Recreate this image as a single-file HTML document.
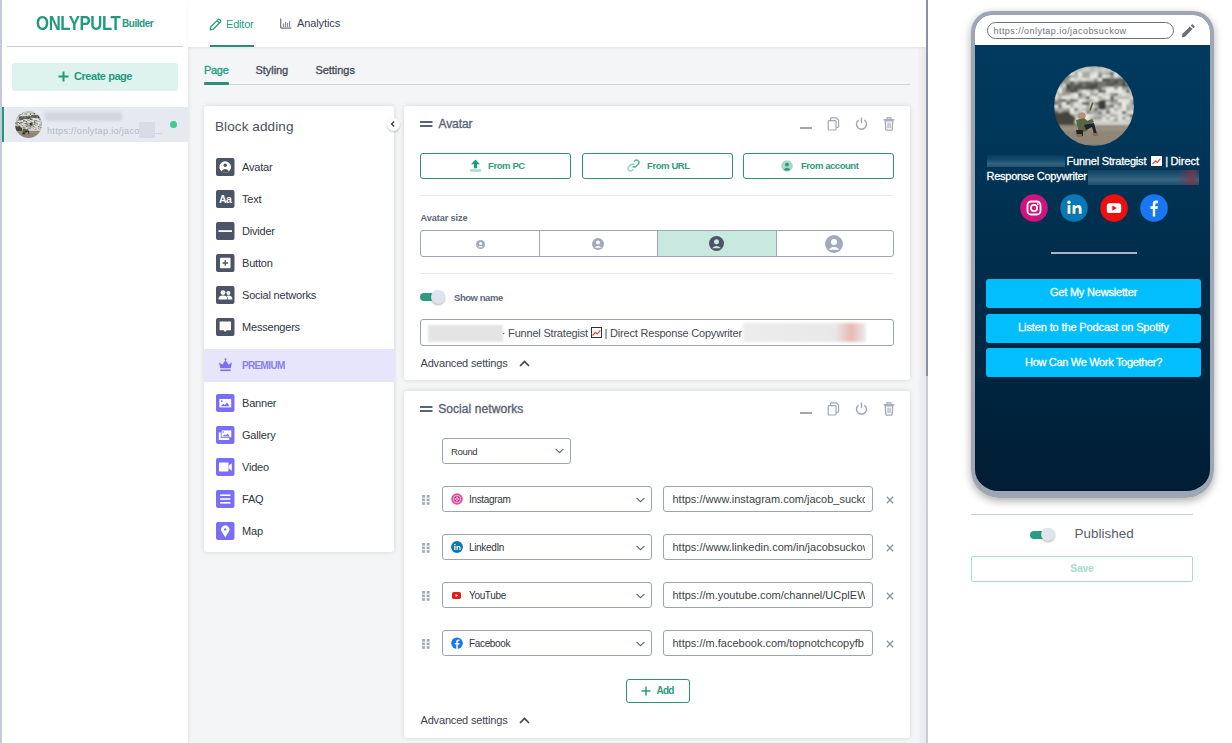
<!DOCTYPE html>
<html><head><meta charset="utf-8">
<style>
*{box-sizing:border-box;margin:0;padding:0}
html,body{width:1232px;height:743px;overflow:hidden;background:#f3f5f7;font-family:"Liberation Sans",sans-serif;color:#3b4150}
.a{position:absolute}
.t{position:absolute;white-space:nowrap;line-height:1}
svg{display:block}
</style></head><body>

<!-- left strip -->
<div class="a" style="left:0;top:0;width:2px;height:743px;background:#c5cbd9"></div>

<!-- sidebar -->
<div class="a" style="left:2px;top:0;width:186px;height:743px;background:#fff;box-shadow:1px 0 3px rgba(0,0,0,.08)">
</div>
<div class="t" style="left:36.3px;top:14.4px;font-size:19.5px;font-weight:700;letter-spacing:-0.4px;color:#1f9a7d;transform:scaleX(.855);transform-origin:0 0">ONLYPULT</div>
<div class="t" style="left:122px;top:19px;font-size:10px;font-weight:700;letter-spacing:-0.45px;color:#1f9a7d">Builder</div>
<div class="a" style="left:7px;top:46px;width:176px;height:1px;background:#c9ced8"></div>
<div class="a" style="left:12px;top:63px;width:166px;height:28px;background:#dff3ee;border-radius:3px"></div>
<svg class="a" style="left:58px;top:71px" width="11" height="11" viewBox="0 0 11 11"><path d="M5.5 0.5v10M0.5 5.5h10" stroke="#1f9a7d" stroke-width="2"/></svg>
<div class="t" style="left:74px;top:71px;font-size:11px;font-weight:700;letter-spacing:-0.45px;color:#1f9a7d">Create page</div>
<!-- page row -->
<div class="a" style="left:2px;top:107px;width:186px;height:35px;background:#e6e9f0"></div>
<div class="a" style="left:2px;top:107px;width:2px;height:35px;background:#1f9a7d"></div>
<svg class="a" style="left:15px;top:111px" width="27" height="27" viewBox="0 0 80 80"><defs><clipPath id="cp2"><circle cx="40" cy="40" r="40"/></clipPath><filter id="bl2" x="-5%" y="-5%" width="110%" height="110%"><feGaussianBlur stdDeviation="1.5"/></filter></defs><g clip-path="url(#cp2)">
<g filter="url(#bl2)"><rect width="80" height="80" fill="#b0b0aa"/><rect x="0" y="0" width="5" height="4" fill="#b8b8b2"/><rect x="4" y="0" width="4" height="3" fill="#b8b8b2"/><rect x="8" y="0" width="6" height="3" fill="#d0d0ca"/><rect x="12" y="0" width="4" height="3" fill="#d0d0ca"/><rect x="16" y="0" width="6" height="3" fill="#b8b8b2"/><rect x="20" y="0" width="5" height="3" fill="#d0d0ca"/><rect x="24" y="0" width="4" height="3" fill="#b8b8b2"/><rect x="28" y="0" width="6" height="3" fill="#c8c8c2"/><rect x="32" y="0" width="5" height="3" fill="#d0d0ca"/><rect x="36" y="0" width="5" height="4" fill="#b8b8b2"/><rect x="40" y="0" width="5" height="4" fill="#c8c8c2"/><rect x="44" y="0" width="4" height="4" fill="#b8b8b2"/><rect x="48" y="0" width="6" height="4" fill="#c8c8c2"/><rect x="52" y="0" width="4" height="4" fill="#b8b8b2"/><rect x="56" y="0" width="5" height="3" fill="#d0d0ca"/><rect x="60" y="0" width="4" height="3" fill="#b8b8b2"/><rect x="64" y="0" width="5" height="4" fill="#c8c8c2"/><rect x="68" y="0" width="5" height="3" fill="#d0d0ca"/><rect x="72" y="0" width="6" height="4" fill="#c8c8c2"/><rect x="76" y="0" width="5" height="3" fill="#d0d0ca"/><rect x="0" y="3" width="4" height="3" fill="#c8c8c2"/><rect x="4" y="3" width="4" height="4" fill="#c8c8c2"/><rect x="8" y="3" width="6" height="3" fill="#c8c8c2"/><rect x="12" y="3" width="6" height="3" fill="#c8c8c2"/><rect x="16" y="3" width="4" height="4" fill="#d0d0ca"/><rect x="20" y="3" width="4" height="4" fill="#c8c8c2"/><rect x="24" y="3" width="5" height="3" fill="#b8b8b2"/><rect x="28" y="3" width="6" height="3" fill="#d0d0ca"/><rect x="32" y="3" width="4" height="4" fill="#c8c8c2"/><rect x="36" y="3" width="5" height="4" fill="#b8b8b2"/><rect x="40" y="3" width="4" height="3" fill="#c8c8c2"/><rect x="44" y="3" width="4" height="4" fill="#c8c8c2"/><rect x="48" y="3" width="4" height="4" fill="#d0d0ca"/><rect x="52" y="3" width="5" height="3" fill="#c8c8c2"/><rect x="56" y="3" width="4" height="3" fill="#d0d0ca"/><rect x="60" y="3" width="6" height="3" fill="#c8c8c2"/><rect x="64" y="3" width="5" height="3" fill="#d0d0ca"/><rect x="68" y="3" width="4" height="3" fill="#c8c8c2"/><rect x="72" y="3" width="4" height="4" fill="#d0d0ca"/><rect x="76" y="3" width="5" height="4" fill="#b8b8b2"/><rect x="0" y="6" width="4" height="3" fill="#9c9c96"/><rect x="4" y="6" width="6" height="3" fill="#d6d6d0"/><rect x="8" y="6" width="6" height="3" fill="#e2e2dc"/><rect x="12" y="6" width="5" height="3" fill="#ececE6"/><rect x="16" y="6" width="5" height="4" fill="#e2e2dc"/><rect x="20" y="6" width="4" height="4" fill="#aaaaa4"/><rect x="24" y="6" width="5" height="3" fill="#ececE6"/><rect x="28" y="6" width="5" height="4" fill="#aaaaa4"/><rect x="32" y="6" width="4" height="3" fill="#aaaaa4"/><rect x="36" y="6" width="5" height="4" fill="#d6d6d0"/><rect x="40" y="6" width="4" height="4" fill="#e2e2dc"/><rect x="44" y="6" width="4" height="3" fill="#9c9c96"/><rect x="48" y="6" width="5" height="3" fill="#b8b8b2"/><rect x="52" y="6" width="5" height="3" fill="#aaaaa4"/><rect x="56" y="6" width="4" height="4" fill="#5c5c56"/><rect x="60" y="6" width="6" height="3" fill="#e2e2dc"/><rect x="64" y="6" width="4" height="4" fill="#d6d6d0"/><rect x="68" y="6" width="5" height="4" fill="#5c5c56"/><rect x="72" y="6" width="6" height="4" fill="#5c5c56"/><rect x="76" y="6" width="4" height="3" fill="#d6d6d0"/><rect x="0" y="9" width="5" height="3" fill="#e2e2dc"/><rect x="4" y="9" width="4" height="4" fill="#d6d6d0"/><rect x="8" y="9" width="5" height="4" fill="#9c9c96"/><rect x="12" y="9" width="5" height="3" fill="#767670"/><rect x="16" y="9" width="6" height="3" fill="#aaaaa4"/><rect x="20" y="9" width="6" height="4" fill="#b8b8b2"/><rect x="24" y="9" width="5" height="4" fill="#e2e2dc"/><rect x="28" y="9" width="6" height="4" fill="#aaaaa4"/><rect x="32" y="9" width="4" height="4" fill="#aaaaa4"/><rect x="36" y="9" width="4" height="3" fill="#ececE6"/><rect x="40" y="9" width="4" height="3" fill="#ececE6"/><rect x="44" y="9" width="4" height="3" fill="#767670"/><rect x="48" y="9" width="4" height="4" fill="#ececE6"/><rect x="52" y="9" width="5" height="4" fill="#d6d6d0"/><rect x="56" y="9" width="5" height="4" fill="#9c9c96"/><rect x="60" y="9" width="5" height="3" fill="#e2e2dc"/><rect x="64" y="9" width="6" height="4" fill="#b8b8b2"/><rect x="68" y="9" width="4" height="3" fill="#d6d6d0"/><rect x="72" y="9" width="4" height="4" fill="#e2e2dc"/><rect x="76" y="9" width="4" height="3" fill="#e2e2dc"/><rect x="0" y="12" width="6" height="4" fill="#d6d6d0"/><rect x="4" y="12" width="4" height="3" fill="#5c5c56"/><rect x="8" y="12" width="4" height="3" fill="#767670"/><rect x="12" y="12" width="6" height="3" fill="#9c9c96"/><rect x="16" y="12" width="5" height="3" fill="#ececE6"/><rect x="20" y="12" width="4" height="3" fill="#d6d6d0"/><rect x="24" y="12" width="5" height="3" fill="#d6d6d0"/><rect x="28" y="12" width="6" height="3" fill="#e2e2dc"/><rect x="32" y="12" width="6" height="4" fill="#d6d6d0"/><rect x="36" y="12" width="4" height="3" fill="#d6d6d0"/><rect x="40" y="12" width="6" height="3" fill="#9c9c96"/><rect x="44" y="12" width="4" height="4" fill="#ececE6"/><rect x="48" y="12" width="5" height="3" fill="#4a4a44"/><rect x="52" y="12" width="4" height="4" fill="#55554f"/><rect x="56" y="12" width="5" height="4" fill="#75756f"/><rect x="60" y="12" width="4" height="4" fill="#62625c"/><rect x="64" y="12" width="6" height="4" fill="#62625c"/><rect x="68" y="12" width="5" height="3" fill="#62625c"/><rect x="72" y="12" width="6" height="4" fill="#5c5c56"/><rect x="76" y="12" width="6" height="3" fill="#767670"/><rect x="0" y="15" width="6" height="4" fill="#b8b8b2"/><rect x="4" y="15" width="6" height="3" fill="#5c5c56"/><rect x="8" y="15" width="5" height="4" fill="#9c9c96"/><rect x="12" y="15" width="4" height="4" fill="#9c9c96"/><rect x="16" y="15" width="6" height="4" fill="#5c5c56"/><rect x="20" y="15" width="5" height="3" fill="#aaaaa4"/><rect x="24" y="15" width="4" height="3" fill="#75756f"/><rect x="28" y="15" width="6" height="3" fill="#75756f"/><rect x="32" y="15" width="4" height="4" fill="#62625c"/><rect x="36" y="15" width="5" height="3" fill="#75756f"/><rect x="40" y="15" width="5" height="4" fill="#62625c"/><rect x="44" y="15" width="6" height="4" fill="#75756f"/><rect x="48" y="15" width="6" height="3" fill="#75756f"/><rect x="52" y="15" width="6" height="3" fill="#62625c"/><rect x="56" y="15" width="4" height="3" fill="#62625c"/><rect x="60" y="15" width="6" height="4" fill="#4a4a44"/><rect x="64" y="15" width="4" height="4" fill="#75756f"/><rect x="68" y="15" width="6" height="4" fill="#55554f"/><rect x="72" y="15" width="6" height="4" fill="#9c9c96"/><rect x="76" y="15" width="5" height="3" fill="#d6d6d0"/><rect x="0" y="18" width="6" height="3" fill="#9c9c96"/><rect x="4" y="18" width="6" height="3" fill="#9c9c96"/><rect x="8" y="18" width="6" height="4" fill="#d6d6d0"/><rect x="12" y="18" width="6" height="4" fill="#4a4a44"/><rect x="16" y="18" width="4" height="3" fill="#62625c"/><rect x="20" y="18" width="4" height="3" fill="#62625c"/><rect x="24" y="18" width="5" height="3" fill="#4a4a44"/><rect x="28" y="18" width="6" height="3" fill="#75756f"/><rect x="32" y="18" width="4" height="3" fill="#55554f"/><rect x="36" y="18" width="5" height="3" fill="#4a4a44"/><rect x="40" y="18" width="6" height="3" fill="#4a4a44"/><rect x="44" y="18" width="4" height="3" fill="#75756f"/><rect x="48" y="18" width="4" height="3" fill="#75756f"/><rect x="52" y="18" width="4" height="3" fill="#62625c"/><rect x="56" y="18" width="6" height="3" fill="#55554f"/><rect x="60" y="18" width="4" height="3" fill="#75756f"/><rect x="64" y="18" width="5" height="4" fill="#75756f"/><rect x="68" y="18" width="4" height="3" fill="#4a4a44"/><rect x="72" y="18" width="5" height="4" fill="#6a6a64"/><rect x="76" y="18" width="5" height="3" fill="#ececE6"/><rect x="0" y="21" width="6" height="3" fill="#aaaaa4"/><rect x="4" y="21" width="6" height="4" fill="#e2e2dc"/><rect x="8" y="21" width="6" height="4" fill="#aaaaa4"/><rect x="12" y="21" width="5" height="3" fill="#4a4a44"/><rect x="16" y="21" width="5" height="3" fill="#62625c"/><rect x="20" y="21" width="5" height="3" fill="#4a4a44"/><rect x="24" y="21" width="4" height="4" fill="#62625c"/><rect x="28" y="21" width="4" height="4" fill="#55554f"/><rect x="32" y="21" width="4" height="4" fill="#55554f"/><rect x="36" y="21" width="5" height="3" fill="#4a4a44"/><rect x="40" y="21" width="6" height="3" fill="#62625c"/><rect x="44" y="21" width="6" height="3" fill="#75756f"/><rect x="48" y="21" width="6" height="3" fill="#b8b8b2"/><rect x="52" y="21" width="6" height="3" fill="#e2e2dc"/><rect x="56" y="21" width="6" height="3" fill="#ececE6"/><rect x="60" y="21" width="5" height="3" fill="#9c9c96"/><rect x="64" y="21" width="5" height="4" fill="#ececE6"/><rect x="68" y="21" width="5" height="3" fill="#9c9c96"/><rect x="72" y="21" width="4" height="3" fill="#9c9c96"/><rect x="76" y="21" width="5" height="4" fill="#e2e2dc"/><rect x="0" y="24" width="6" height="3" fill="#767670"/><rect x="4" y="24" width="5" height="4" fill="#ececE6"/><rect x="8" y="24" width="5" height="4" fill="#9c9c96"/><rect x="12" y="24" width="6" height="4" fill="#75756f"/><rect x="16" y="24" width="6" height="4" fill="#4a4a44"/><rect x="20" y="24" width="6" height="3" fill="#62625c"/><rect x="24" y="24" width="6" height="4" fill="#b8b8b2"/><rect x="28" y="24" width="6" height="4" fill="#ececE6"/><rect x="32" y="24" width="5" height="3" fill="#d6d6d0"/><rect x="36" y="24" width="5" height="4" fill="#aaaaa4"/><rect x="40" y="24" width="4" height="3" fill="#e2e2dc"/><rect x="44" y="24" width="5" height="3" fill="#5c5c56"/><rect x="48" y="24" width="6" height="3" fill="#6a6a64"/><rect x="52" y="24" width="5" height="3" fill="#ececE6"/><rect x="56" y="24" width="5" height="3" fill="#e2e2dc"/><rect x="60" y="24" width="4" height="4" fill="#ececE6"/><rect x="64" y="24" width="6" height="4" fill="#ececE6"/><rect x="68" y="24" width="6" height="3" fill="#d6d6d0"/><rect x="72" y="24" width="4" height="3" fill="#5c5c56"/><rect x="76" y="24" width="5" height="4" fill="#d6d6d0"/><rect x="0" y="27" width="6" height="3" fill="#d6d6d0"/><rect x="4" y="27" width="4" height="3" fill="#aaaaa4"/><rect x="8" y="27" width="4" height="3" fill="#9c9c96"/><rect x="12" y="27" width="5" height="4" fill="#aaaaa4"/><rect x="16" y="27" width="4" height="3" fill="#d6d6d0"/><rect x="20" y="27" width="4" height="3" fill="#ececE6"/><rect x="24" y="27" width="6" height="3" fill="#6a6a64"/><rect x="28" y="27" width="5" height="4" fill="#b8b8b2"/><rect x="32" y="27" width="5" height="4" fill="#ececE6"/><rect x="36" y="27" width="4" height="4" fill="#aaaaa4"/><rect x="40" y="27" width="4" height="4" fill="#9c9c96"/><rect x="44" y="27" width="5" height="3" fill="#ececE6"/><rect x="48" y="27" width="6" height="4" fill="#d6d6d0"/><rect x="52" y="27" width="4" height="4" fill="#d6d6d0"/><rect x="56" y="27" width="4" height="4" fill="#9c9c96"/><rect x="60" y="27" width="6" height="3" fill="#6a6a64"/><rect x="64" y="27" width="5" height="4" fill="#d6d6d0"/><rect x="68" y="27" width="4" height="4" fill="#e2e2dc"/><rect x="72" y="27" width="6" height="3" fill="#d6d6d0"/><rect x="76" y="27" width="6" height="4" fill="#b8b8b2"/><rect x="0" y="30" width="4" height="4" fill="#e2e2dc"/><rect x="4" y="30" width="5" height="3" fill="#b8b8b2"/><rect x="8" y="30" width="6" height="4" fill="#ececE6"/><rect x="12" y="30" width="5" height="4" fill="#ececE6"/><rect x="16" y="30" width="6" height="3" fill="#d6d6d0"/><rect x="20" y="30" width="4" height="4" fill="#ececE6"/><rect x="24" y="30" width="5" height="3" fill="#9c9c96"/><rect x="28" y="30" width="5" height="3" fill="#b8b8b2"/><rect x="32" y="30" width="4" height="3" fill="#5c5c56"/><rect x="36" y="30" width="5" height="3" fill="#ececE6"/><rect x="40" y="30" width="6" height="3" fill="#e2e2dc"/><rect x="44" y="30" width="6" height="4" fill="#aaaaa4"/><rect x="48" y="30" width="5" height="3" fill="#d6d6d0"/><rect x="52" y="30" width="6" height="3" fill="#ececE6"/><rect x="56" y="30" width="4" height="3" fill="#6a6a64"/><rect x="60" y="30" width="5" height="3" fill="#d6d6d0"/><rect x="64" y="30" width="6" height="4" fill="#b8b8b2"/><rect x="68" y="30" width="5" height="4" fill="#b8b8b2"/><rect x="72" y="30" width="6" height="3" fill="#b8b8b2"/><rect x="76" y="30" width="6" height="3" fill="#d6d6d0"/><rect x="0" y="33" width="5" height="4" fill="#aaaaa4"/><rect x="4" y="33" width="4" height="4" fill="#767670"/><rect x="8" y="33" width="4" height="4" fill="#5c5c56"/><rect x="12" y="33" width="5" height="4" fill="#aaaaa4"/><rect x="16" y="33" width="6" height="3" fill="#6a6a64"/><rect x="20" y="33" width="6" height="3" fill="#767670"/><rect x="24" y="33" width="5" height="4" fill="#ececE6"/><rect x="28" y="33" width="5" height="4" fill="#e2e2dc"/><rect x="32" y="33" width="6" height="3" fill="#b8b8b2"/><rect x="36" y="33" width="4" height="4" fill="#aaaaa4"/><rect x="40" y="33" width="4" height="4" fill="#ececE6"/><rect x="44" y="33" width="5" height="3" fill="#e2e2dc"/><rect x="48" y="33" width="6" height="4" fill="#9c9c96"/><rect x="52" y="33" width="5" height="3" fill="#aaaaa4"/><rect x="56" y="33" width="4" height="4" fill="#767670"/><rect x="60" y="33" width="5" height="4" fill="#9c9c96"/><rect x="64" y="33" width="5" height="3" fill="#ececE6"/><rect x="68" y="33" width="5" height="3" fill="#e2e2dc"/><rect x="72" y="33" width="5" height="4" fill="#e2e2dc"/><rect x="76" y="33" width="6" height="3" fill="#aaaaa4"/><rect x="0" y="36" width="5" height="4" fill="#767670"/><rect x="4" y="36" width="5" height="3" fill="#9c9c96"/><rect x="8" y="36" width="4" height="4" fill="#ececE6"/><rect x="12" y="36" width="4" height="4" fill="#5c5c56"/><rect x="16" y="36" width="4" height="3" fill="#aaaaa4"/><rect x="20" y="36" width="4" height="3" fill="#e2e2dc"/><rect x="24" y="36" width="6" height="3" fill="#d6d6d0"/><rect x="28" y="36" width="5" height="3" fill="#5c5c56"/><rect x="32" y="36" width="6" height="4" fill="#5c5c56"/><rect x="36" y="36" width="5" height="3" fill="#e2e2dc"/><rect x="40" y="36" width="5" height="3" fill="#6a6a64"/><rect x="44" y="36" width="6" height="4" fill="#ececE6"/><rect x="48" y="36" width="5" height="4" fill="#ececE6"/><rect x="52" y="36" width="5" height="4" fill="#d6d6d0"/><rect x="56" y="36" width="5" height="3" fill="#aaaaa4"/><rect x="60" y="36" width="6" height="4" fill="#aaaaa4"/><rect x="64" y="36" width="4" height="4" fill="#9c9c96"/><rect x="68" y="36" width="6" height="4" fill="#ececE6"/><rect x="72" y="36" width="4" height="4" fill="#d6d6d0"/><rect x="76" y="36" width="4" height="3" fill="#9c9c96"/><rect x="0" y="39" width="6" height="4" fill="#ececE6"/><rect x="4" y="39" width="6" height="3" fill="#767670"/><rect x="8" y="39" width="5" height="3" fill="#e2e2dc"/><rect x="12" y="39" width="6" height="4" fill="#ececE6"/><rect x="16" y="39" width="5" height="4" fill="#b8b8b2"/><rect x="20" y="39" width="6" height="3" fill="#e2e2dc"/><rect x="24" y="39" width="6" height="3" fill="#d6d6d0"/><rect x="28" y="39" width="4" height="4" fill="#ececE6"/><rect x="32" y="39" width="4" height="3" fill="#aaaaa4"/><rect x="36" y="39" width="5" height="4" fill="#e2e2dc"/><rect x="40" y="39" width="5" height="3" fill="#b8b8b2"/><rect x="44" y="39" width="6" height="4" fill="#aaaaa4"/><rect x="48" y="39" width="6" height="3" fill="#ececE6"/><rect x="52" y="39" width="6" height="4" fill="#9c9c96"/><rect x="56" y="39" width="6" height="3" fill="#6a6a64"/><rect x="60" y="39" width="5" height="4" fill="#e2e2dc"/><rect x="64" y="39" width="6" height="4" fill="#aaaaa4"/><rect x="68" y="39" width="5" height="3" fill="#ececE6"/><rect x="72" y="39" width="5" height="4" fill="#aaaaa4"/><rect x="76" y="39" width="6" height="3" fill="#b8b8b2"/><rect x="0" y="42" width="6" height="3" fill="#aaaaa4"/><rect x="4" y="42" width="6" height="3" fill="#aaaaa4"/><rect x="8" y="42" width="4" height="4" fill="#aaaaa4"/><rect x="12" y="42" width="5" height="4" fill="#9c9c96"/><rect x="16" y="42" width="5" height="4" fill="#ececE6"/><rect x="20" y="42" width="6" height="3" fill="#767670"/><rect x="24" y="42" width="6" height="3" fill="#d6d6d0"/><rect x="28" y="42" width="4" height="4" fill="#b8b8b2"/><rect x="32" y="42" width="4" height="4" fill="#aaaaa4"/><rect x="36" y="42" width="4" height="4" fill="#b8b8b2"/><rect x="40" y="42" width="6" height="3" fill="#6a6a64"/><rect x="44" y="42" width="4" height="3" fill="#ececE6"/><rect x="48" y="42" width="6" height="4" fill="#d6d6d0"/><rect x="52" y="42" width="4" height="3" fill="#9c9c96"/><rect x="56" y="42" width="4" height="3" fill="#ececE6"/><rect x="60" y="42" width="6" height="4" fill="#aaaaa4"/><rect x="64" y="42" width="4" height="4" fill="#d6d6d0"/><rect x="68" y="42" width="4" height="3" fill="#ececE6"/><rect x="72" y="42" width="5" height="4" fill="#aaaaa4"/><rect x="76" y="42" width="5" height="4" fill="#b8b8b2"/><rect x="0" y="45" width="6" height="4" fill="#5c5c56"/><rect x="4" y="45" width="5" height="4" fill="#b8b8b2"/><rect x="8" y="45" width="6" height="3" fill="#6a6a64"/><rect x="12" y="45" width="5" height="4" fill="#5c5c56"/><rect x="16" y="45" width="5" height="3" fill="#e2e2dc"/><rect x="20" y="45" width="5" height="4" fill="#d6d6d0"/><rect x="24" y="45" width="6" height="3" fill="#b8b8b2"/><rect x="28" y="45" width="4" height="4" fill="#ececE6"/><rect x="32" y="45" width="6" height="3" fill="#767670"/><rect x="36" y="45" width="6" height="4" fill="#aaaaa4"/><rect x="40" y="45" width="4" height="4" fill="#aaaaa4"/><rect x="44" y="45" width="6" height="3" fill="#767670"/><rect x="48" y="45" width="5" height="3" fill="#d6d6d0"/><rect x="52" y="45" width="6" height="3" fill="#6a6a64"/><rect x="56" y="45" width="6" height="4" fill="#d6d6d0"/><rect x="60" y="45" width="6" height="4" fill="#e2e2dc"/><rect x="64" y="45" width="4" height="4" fill="#e2e2dc"/><rect x="68" y="45" width="5" height="3" fill="#5c5c56"/><rect x="72" y="45" width="4" height="3" fill="#d6d6d0"/><rect x="76" y="45" width="5" height="4" fill="#ececE6"/><rect x="0" y="48" width="5" height="3" fill="#e2e2dc"/><rect x="4" y="48" width="4" height="3" fill="#d6d6d0"/><rect x="8" y="48" width="5" height="3" fill="#ececE6"/><rect x="12" y="48" width="6" height="3" fill="#d6d6d0"/><rect x="16" y="48" width="4" height="3" fill="#aaaaa4"/><rect x="20" y="48" width="6" height="4" fill="#b8b8b2"/><rect x="24" y="48" width="5" height="3" fill="#767670"/><rect x="28" y="48" width="5" height="3" fill="#ececE6"/><rect x="32" y="48" width="4" height="3" fill="#ececE6"/><rect x="36" y="48" width="4" height="4" fill="#d6d6d0"/><rect x="40" y="48" width="6" height="3" fill="#b8b8b2"/><rect x="44" y="48" width="5" height="3" fill="#aaaaa4"/><rect x="48" y="48" width="4" height="3" fill="#b8b8b2"/><rect x="52" y="48" width="5" height="3" fill="#e2e2dc"/><rect x="56" y="48" width="4" height="4" fill="#aaaaa4"/><rect x="60" y="48" width="6" height="3" fill="#b8b8b2"/><rect x="64" y="48" width="4" height="3" fill="#e2e2dc"/><rect x="68" y="48" width="4" height="3" fill="#d6d6d0"/><rect x="72" y="48" width="4" height="4" fill="#aaaaa4"/><rect x="76" y="48" width="5" height="3" fill="#5c5c56"/><rect x="0" y="51" width="4" height="3" fill="#767670"/><rect x="4" y="51" width="5" height="4" fill="#d6d6d0"/><rect x="8" y="51" width="6" height="4" fill="#aaaaa4"/><rect x="12" y="51" width="6" height="3" fill="#9c9c96"/><rect x="16" y="51" width="4" height="4" fill="#aaaaa4"/><rect x="20" y="51" width="6" height="4" fill="#ececE6"/><rect x="24" y="51" width="4" height="4" fill="#9c9c96"/><rect x="28" y="51" width="6" height="4" fill="#e2e2dc"/><rect x="32" y="51" width="6" height="3" fill="#e2e2dc"/><rect x="36" y="51" width="5" height="3" fill="#aaaaa4"/><rect x="40" y="51" width="5" height="4" fill="#9c9c96"/><rect x="44" y="51" width="5" height="3" fill="#9c9c96"/><rect x="48" y="51" width="6" height="3" fill="#e2e2dc"/><rect x="52" y="51" width="5" height="4" fill="#aaaaa4"/><rect x="56" y="51" width="6" height="4" fill="#ececE6"/><rect x="60" y="51" width="4" height="3" fill="#b8b8b2"/><rect x="64" y="51" width="4" height="4" fill="#e2e2dc"/><rect x="68" y="51" width="5" height="3" fill="#9c9c96"/><rect x="72" y="51" width="5" height="3" fill="#ececE6"/><rect x="76" y="51" width="4" height="4" fill="#aaaaa4"/><rect x="0" y="54" width="4" height="3" fill="#9c9c96"/><rect x="4" y="54" width="6" height="3" fill="#9c9c96"/><rect x="8" y="54" width="6" height="3" fill="#ececE6"/><rect x="12" y="54" width="5" height="4" fill="#d6d6d0"/><rect x="16" y="54" width="4" height="3" fill="#e2e2dc"/><rect x="20" y="54" width="6" height="3" fill="#e2e2dc"/><rect x="24" y="54" width="4" height="4" fill="#e2e2dc"/><rect x="28" y="54" width="4" height="3" fill="#d6d6d0"/><rect x="32" y="54" width="6" height="3" fill="#d6d6d0"/><rect x="36" y="54" width="6" height="3" fill="#9c9c96"/><rect x="40" y="54" width="4" height="4" fill="#ececE6"/><rect x="44" y="54" width="4" height="4" fill="#e2e2dc"/><rect x="48" y="54" width="6" height="3" fill="#e2e2dc"/><rect x="52" y="54" width="4" height="4" fill="#ececE6"/><rect x="56" y="54" width="5" height="4" fill="#b8b8b2"/><rect x="60" y="54" width="4" height="4" fill="#5c5c56"/><rect x="64" y="54" width="5" height="3" fill="#ececE6"/><rect x="68" y="54" width="5" height="4" fill="#ececE6"/><rect x="72" y="54" width="4" height="4" fill="#9c9c96"/><rect x="76" y="54" width="6" height="3" fill="#9c9c96"/><rect x="0" y="57" width="4" height="3" fill="#ececE6"/><rect x="4" y="57" width="4" height="3" fill="#b8b8b2"/><rect x="8" y="57" width="4" height="4" fill="#aaaaa4"/><rect x="12" y="57" width="4" height="4" fill="#767670"/><rect x="16" y="57" width="6" height="3" fill="#d6d6d0"/><rect x="20" y="57" width="4" height="4" fill="#d6d6d0"/><rect x="24" y="57" width="6" height="3" fill="#e2e2dc"/><rect x="28" y="57" width="5" height="4" fill="#ececE6"/><rect x="32" y="57" width="4" height="4" fill="#d6d6d0"/><rect x="36" y="57" width="6" height="4" fill="#ececE6"/><rect x="40" y="57" width="5" height="4" fill="#e2e2dc"/><rect x="44" y="57" width="6" height="4" fill="#ececE6"/><rect x="48" y="57" width="5" height="4" fill="#ececE6"/><rect x="52" y="57" width="4" height="3" fill="#aaaaa4"/><rect x="56" y="57" width="6" height="3" fill="#b8b8b2"/><rect x="60" y="57" width="5" height="3" fill="#9c9c96"/><rect x="64" y="57" width="6" height="4" fill="#6a6a64"/><rect x="68" y="57" width="4" height="4" fill="#b8b8b2"/><rect x="72" y="57" width="4" height="4" fill="#ececE6"/><rect x="76" y="57" width="5" height="4" fill="#ececE6"/><rect x="44" y="34" width="8" height="10" rx="3" fill="#3c3c37"/><path d="M0 57h80v23H0z" fill="#8f8678"/><path d="M30 55h50v4H30z" fill="#d0d0ca"/><path d="M0 61h80v4H0z" fill="#9a9080"/><path d="M0 47l14-1 8 6-2 7H0z" fill="#44443e"/></g>
<circle cx="28.5" cy="49.5" r="3.2" fill="#b8907a"/>
    <path d="M22 54l8-2 6 5-3 8-8 2z" fill="#5a6540"/>
    <path d="M33 55l5-2 2 3-5 3z" fill="#5a6540"/>
    <path d="M35 44l3-8 1.6 1-3 8z" fill="#5a6540"/>
    <path d="M30 59l10-2 3 11h-3l-2-7-6 3z" fill="#1e2332"/>
    <path d="M22 64l7 0 0 6-6 0z" fill="#1e2332"/>
    <rect x="23" y="68" width="5" height="3" fill="#8a6a3e"/>
    <rect x="39" y="67" width="5" height="3" fill="#8a6a3e"/>
  </g></svg>
<div class="a" style="left:45px;top:112px;width:77px;height:9px;background:#d3d6de;filter:blur(1.5px)"></div>
<div class="t" style="left:47px;top:127px;font-size:9px;letter-spacing:0.35px;color:#b3b8c4">https://onlytap.io/jaco</div>
<div class="a" style="left:139px;top:122px;width:16px;height:16px;background:#d9dce4;filter:blur(.6px)"></div>
<div class="t" style="left:155px;top:127px;font-size:9px;letter-spacing:0px;color:#b3b8c4">...</div>
<div class="a" style="left:170px;top:121px;width:7px;height:7px;border-radius:50%;background:#3ecf8e"></div>

<!-- editor header -->
<div class="a" style="left:188px;top:0;width:738px;height:47px;background:#fff;box-shadow:0 1px 2px rgba(0,0,0,.07)"></div>

<!-- header tabs -->
<svg class="a" style="left:209px;top:17.5px" width="13" height="13" viewBox="0 0 13 13"><path d="M1.2 11.8l.6-3L9 1.6a1.2 1.2 0 0 1 1.7 0l.7.7a1.2 1.2 0 0 1 0 1.7L4.2 11.2z" fill="none" stroke="#2a9d80" stroke-width="1.3" stroke-linejoin="round"/><path d="M8 2.6l2.4 2.4" stroke="#2a9d80" stroke-width="1.1"/></svg>
<div class="t" style="left:226px;top:18.7px;font-size:11px;letter-spacing:-0.2px;color:#2a9d80">Editor</div>
<div class="a" style="left:210px;top:45px;width:44px;height:2px;background:#2a8f76"></div>
<svg class="a" style="left:280px;top:17px" width="12" height="12" viewBox="0 0 12 12"><path d="M0.8 1.5v9.6h10.6" fill="none" stroke="#4a505c" stroke-width="1"/><rect x="3" y="6.5" width="1.2" height="3.6" fill="#8a909c"/><rect x="5" y="5" width="1.2" height="5.1" fill="#8a909c"/><rect x="7" y="6" width="1.2" height="4.1" fill="#8a909c"/><rect x="9" y="4" width="1.2" height="6.1" fill="#8a909c"/></svg>
<div class="t" style="left:297px;top:18.2px;font-size:11px;letter-spacing:-0.1px;color:#3b4150">Analytics</div>

<!-- sub tabs -->
<div class="t" style="left:204px;top:64.7px;font-size:11px;letter-spacing:-0.3px;-webkit-text-stroke:.35px #2a9d80;color:#2a9d80">Page</div>
<div class="t" style="left:255.5px;top:64.7px;font-size:11px;letter-spacing:-0.05px;-webkit-text-stroke:.35px #4a505c;color:#4a505c">Styling</div>
<div class="t" style="left:315.5px;top:64.7px;font-size:11px;letter-spacing:-0.05px;-webkit-text-stroke:.35px #4a505c;color:#4a505c">Settings</div>
<div class="a" style="left:204px;top:84px;width:706px;height:1px;background:#cfd4dc"></div>
<div class="a" style="left:204px;top:82px;width:25px;height:2.5px;background:#2a8f76;border-radius:1px"></div>

<!-- block adding card -->
<div class="a" style="left:204px;top:106px;width:190px;height:446px;background:#fff;border-radius:3px;box-shadow:0 0 5px rgba(0,0,0,.13)"></div>

<div class="t" style="left:215px;top:120px;font-size:13.5px;letter-spacing:0.1px;color:#4a505c">Block adding</div>
<!-- collapse btn -->
<div class="a" style="left:386.5px;top:117.5px;width:13px;height:13px;border-radius:50%;background:#fff;box-shadow:0 1px 2px rgba(0,0,0,.25)"></div>
<svg class="a" style="left:390px;top:121px" width="6" height="6" viewBox="0 0 6 6"><path d="M4.2 0.6L1.6 3l2.6 2.4" fill="none" stroke="#3b4150" stroke-width="1.4"/></svg>

<!-- dark icons -->
<svg class="a" style="left:216px;top:158px" width="19" height="18" viewBox="0 0 19 18"><rect width="18.5" height="18" rx="2" fill="#4b5565"/><circle cx="9.2" cy="9" r="5.8" fill="#fff"/><circle cx="9.2" cy="7.2" r="1.7" fill="#4b5565"/><path d="M5.4 13.2q3.8-4.4 7.6 0a5.8 5.8 0 0 1-7.6 0z" fill="#4b5565"/></svg>
<div class="t" style="left:242px;top:161.5px;font-size:11px;letter-spacing:-0.2px;color:#2f3540">Avatar</div>

<svg class="a" style="left:216px;top:190px" width="19" height="18" viewBox="0 0 19 18"><rect width="18.5" height="18" rx="2" fill="#4b5565"/><text x="9.2" y="13" text-anchor="middle" font-family="Liberation Sans" font-weight="700" font-size="10.5" fill="#fff" letter-spacing="-0.6">Aa</text></svg>
<div class="t" style="left:242px;top:193.5px;font-size:11px;letter-spacing:-0.2px;color:#2f3540">Text</div>

<svg class="a" style="left:216px;top:222px" width="19" height="18" viewBox="0 0 19 18"><rect width="18.5" height="18" rx="2" fill="#4b5565"/><rect x="2.5" y="8.2" width="13.5" height="1.8" fill="#fff"/></svg>
<div class="t" style="left:242px;top:225.5px;font-size:11px;letter-spacing:-0.2px;color:#2f3540">Divider</div>

<svg class="a" style="left:216px;top:254px" width="19" height="18" viewBox="0 0 19 18"><rect width="18.5" height="18" rx="2" fill="#4b5565"/><rect x="4" y="3.8" width="10.5" height="10.5" rx=".8" fill="#fff"/><path d="M9.25 6.2v5.6M6.45 9h5.6" stroke="#4b5565" stroke-width="1.3"/></svg>
<div class="t" style="left:242px;top:257.5px;font-size:11px;letter-spacing:-0.2px;color:#2f3540">Button</div>

<svg class="a" style="left:216px;top:286px" width="19" height="18" viewBox="0 0 19 18"><rect width="18.5" height="18" rx="2" fill="#4b5565"/><circle cx="7" cy="6.6" r="2.4" fill="#fff"/><circle cx="12.4" cy="7" r="2" fill="#fff"/><path d="M2.4 13.4q0-3.8 4.6-3.8t4.6 3.8z" fill="#fff"/><path d="M10.6 10.1q1-.5 1.8-.5q4 0 4 3.8h-4.2q0-2-1.6-3.3z" fill="#fff"/></svg>
<div class="t" style="left:242px;top:289.5px;font-size:11px;letter-spacing:-0.2px;color:#2f3540">Social networks</div>

<svg class="a" style="left:216px;top:318px" width="19" height="18" viewBox="0 0 19 18"><rect width="18.5" height="18" rx="2" fill="#4b5565"/><path d="M3.6 3.6h11.4v8.6H10.6l-1.4 1.7-1.4-1.7H3.6z" fill="#fff"/></svg>
<div class="t" style="left:242px;top:321.5px;font-size:11px;letter-spacing:-0.2px;color:#2f3540">Messengers</div>

<!-- premium -->
<div class="a" style="left:204px;top:349px;width:190px;height:33px;background:#e7e5fc"></div>
<svg class="a" style="left:218px;top:358px" width="15" height="14" viewBox="0 0 15 14"><path d="M1 4.2l3.4 2.6L7.5 2l3.1 4.8L14 4.2l-1.3 6H2.3z" fill="#7a6ef5"/><circle cx="7.5" cy="1.2" r="1" fill="#7a6ef5"/><rect x="2.3" y="11.5" width="10.4" height="1.6" fill="#7a6ef5"/></svg>
<div class="t" style="left:242px;top:360.6px;font-size:10px;font-weight:700;letter-spacing:-0.65px;color:#8a7ef2">PREMIUM</div>

<!-- purple icons -->
<svg class="a" style="left:216px;top:394px" width="19" height="18" viewBox="0 0 19 18"><rect width="18.5" height="18" rx="2" fill="#7a6ef5"/><rect x="3.4" y="5" width="11.8" height="8.4" fill="#fff"/><circle cx="5.8" cy="7.2" r=".9" fill="#7a6ef5"/><path d="M4.8 12.2l2.6-2.4 1.4 1.2 2.2-2.4 2.6 3.6z" fill="#7a6ef5"/></svg>
<div class="t" style="left:242px;top:397.5px;font-size:11px;letter-spacing:-0.2px;color:#2f3540">Banner</div>

<svg class="a" style="left:216px;top:426px" width="19" height="18" viewBox="0 0 19 18"><rect width="18.5" height="18" rx="2" fill="#7a6ef5"/><rect x="2.8" y="6.4" width="10.4" height="7.6" fill="#fff"/><rect x="5.2" y="4" width="10.6" height="7.6" fill="#fff" stroke="#7a6ef5" stroke-width=".8"/><circle cx="7.2" cy="6" r=".8" fill="#7a6ef5"/><path d="M6.4 10.6l2.2-2 1.2 1 1.8-2 2.2 3z" fill="#7a6ef5"/></svg>
<div class="t" style="left:242px;top:429.5px;font-size:11px;letter-spacing:-0.2px;color:#2f3540">Gallery</div>

<svg class="a" style="left:216px;top:458px" width="19" height="18" viewBox="0 0 19 18"><rect width="18.5" height="18" rx="2" fill="#7a6ef5"/><rect x="3" y="4.6" width="9.4" height="8.8" rx=".6" fill="#fff"/><path d="M12.4 8l3.4-2.8v7.6l-3.4-2.8z" fill="#fff"/></svg>
<div class="t" style="left:242px;top:461.5px;font-size:11px;letter-spacing:-0.2px;color:#2f3540">Video</div>

<svg class="a" style="left:216px;top:490px" width="19" height="18" viewBox="0 0 19 18"><rect width="18.5" height="18" rx="2" fill="#7a6ef5"/><rect x="4.2" y="4.4" width="10.2" height="1.6" fill="#fff"/><rect x="4.2" y="8.2" width="10.2" height="1.6" fill="#fff"/><rect x="4.2" y="12" width="10.2" height="1.6" fill="#fff"/></svg>
<div class="t" style="left:242px;top:493.5px;font-size:11px;letter-spacing:-0.2px;color:#2f3540">FAQ</div>

<svg class="a" style="left:216px;top:522px" width="19" height="18" viewBox="0 0 19 18"><rect width="18.5" height="18" rx="2" fill="#7a6ef5"/><path d="M9.25 15.2L5.6 9.6a4.2 4.2 0 1 1 7.3 0z" fill="#fff"/><circle cx="9.25" cy="7.4" r="1.2" fill="#7a6ef5"/></svg>
<div class="t" style="left:242px;top:525.5px;font-size:11px;letter-spacing:-0.2px;color:#2f3540">Map</div>

<!-- avatar card -->
<div class="a" style="left:404px;top:106px;width:506px;height:274px;background:#fff;border-radius:3px;box-shadow:0 0 5px rgba(0,0,0,.13)"></div>

<svg class="a" style="left:420px;top:120.5px" width="13" height="6" viewBox="0 0 13 6"><rect y="0" width="12.5" height="2" fill="#5a6474"/><rect y="4" width="12.5" height="2" fill="#5a6474"/></svg>
<div class="t" style="left:438.4px;top:117.5px;font-size:12px;letter-spacing:-0.05px;-webkit-text-stroke:.35px #5a6474;color:#5a6474">Avatar</div>
<!-- card action icons -->
<div id="acts1">
<div class="a" style="left:800px;top:127px;width:12px;height:2px;background:#a0a8b8"></div>
<svg class="a" style="left:827px;top:116.5px" width="13" height="14" viewBox="0 0 13 14"><path d="M3.6 3.2V1.6a.8.8 0 0 1 .8-.8h5l2.2 2.2v6.6a.8.8 0 0 1-.8.8H9.4" fill="none" stroke="#a0a8b8" stroke-width="1.2"/><rect x="1.2" y="3.6" width="7.8" height="9.4" rx=".8" fill="#fff" stroke="#a0a8b8" stroke-width="1.2"/></svg>
<svg class="a" style="left:854.5px;top:117px" width="13" height="13" viewBox="0 0 13 13"><path d="M3.6 3.2a5 5 0 1 0 5.8 0" fill="none" stroke="#a0a8b8" stroke-width="1.45"/><path d="M6.5 .6v5.6" stroke="#a0a8b8" stroke-width="1.45"/></svg>
<svg class="a" style="left:883px;top:116.5px" width="12" height="14" viewBox="0 0 12 14"><path d="M2.3 3.8h7.4l-.5 8.6a.8.8 0 0 1-.8.7H3.6a.8.8 0 0 1-.8-.7z" fill="none" stroke="#a0a8b8" stroke-width="1.3"/><rect x=".6" y="2.1" width="10.8" height="1.4" fill="#a0a8b8"/><path d="M4 2.2V.9h4v1.3" fill="none" stroke="#a0a8b8" stroke-width="1.1"/><rect x="4.5" y="5.6" width="1.1" height="5.6" fill="#a0a8b8"/><rect x="6.5" y="5.6" width="1.1" height="5.6" fill="#a0a8b8"/></svg>
</div>
<!-- upload buttons -->
<div class="a" style="left:420px;top:153px;width:151px;height:26px;border:1.4px solid #2f8f77;border-radius:3px"></div>
<div class="a" style="left:582px;top:153px;width:151px;height:26px;border:1.4px solid #2f8f77;border-radius:3px"></div>
<div class="a" style="left:743px;top:153px;width:151px;height:26px;border:1.4px solid #2f8f77;border-radius:3px"></div>
<svg class="a" style="left:468.5px;top:159px" width="13" height="13" viewBox="0 0 13 13"><path d="M6.5 .4L11 5.2H8.1v4H4.9v-4H2z" fill="#1f9a7d"/><rect x="1" y="10.2" width="11" height="2.6" fill="#a9dccd"/></svg>
<div class="t" style="left:488px;top:161px;font-size:9.5px;font-weight:700;letter-spacing:-0.4px;color:#2f9a7e">From PC</div>
<svg class="a" style="left:627px;top:159px" width="13" height="13" viewBox="0 0 13 13"><path d="M5.6 7.4a2.4 2.4 0 0 0 3.4 0l2.2-2.2a2.4 2.4 0 0 0-3.4-3.4l-.9.9" fill="none" stroke="#5fb79f" stroke-width="1.5"/><path d="M7.4 5.6a2.4 2.4 0 0 0-3.4 0L1.8 7.8a2.4 2.4 0 0 0 3.4 3.4l.9-.9" fill="none" stroke="#9dd3c3" stroke-width="1.5"/></svg>
<div class="t" style="left:647px;top:161px;font-size:9.5px;font-weight:700;letter-spacing:-0.4px;color:#2f9a7e">From URL</div>
<svg class="a" style="left:781px;top:159.5px" width="12" height="12" viewBox="0 0 12 12"><circle cx="6" cy="6" r="5.8" fill="#a6dac9"/><circle cx="6" cy="4.6" r="1.9" fill="#2f9a7e"/><path d="M2.6 9.6q3.4-3.6 6.8 0a5.8 5.8 0 0 1-6.8 0z" fill="#2f9a7e"/></svg>
<div class="t" style="left:801px;top:161px;font-size:9.5px;font-weight:700;letter-spacing:-0.45px;color:#2f9a7e">From account</div>
<div class="a" style="left:420px;top:195px;width:474px;height:1px;background:#e8eaee"></div>
<div class="t" style="left:420.5px;top:214.3px;font-size:9.2px;font-weight:700;letter-spacing:-0.1px;color:#5f6878">Avatar size</div>
<!-- segmented -->
<div class="a" style="left:420px;top:230px;width:474px;height:27px;border:1.4px solid #9ea6b5;border-radius:3px;overflow:hidden">
  <div class="a" style="left:236.5px;top:0;width:118.5px;height:100%;background:#c8e8e0"></div>
  <div class="a" style="left:117.5px;top:0;width:1.4px;height:100%;background:#9ea6b5"></div>
  <div class="a" style="left:236px;top:0;width:1.4px;height:100%;background:#9ea6b5"></div>
  <div class="a" style="left:354.5px;top:0;width:1.4px;height:100%;background:#9ea6b5"></div>
</div>
<svg class="a" style="left:475.5px;top:239.5px" width="9" height="9" viewBox="0 0 12 12"><circle cx="6" cy="6" r="6" fill="#a3abba"/><circle cx="6" cy="4.6" r="2" fill="#fff"/><path d="M2.4 9.8q3.6-3.8 7.2 0z" fill="#fff"/></svg>
<svg class="a" style="left:592px;top:237.5px" width="12" height="12" viewBox="0 0 12 12"><circle cx="6" cy="6" r="6" fill="#a3abba"/><circle cx="6" cy="4.6" r="2" fill="#fff"/><path d="M2.4 9.8q3.6-3.8 7.2 0z" fill="#fff"/></svg>
<svg class="a" style="left:708.5px;top:236px" width="15" height="15" viewBox="0 0 12 12"><circle cx="6" cy="6" r="6" fill="#4b5565"/><circle cx="6" cy="4.6" r="2" fill="#c8e8e0"/><path d="M2.4 9.8q3.6-3.8 7.2 0z" fill="#c8e8e0"/></svg>
<svg class="a" style="left:825px;top:234.5px" width="18" height="18" viewBox="0 0 12 12"><circle cx="6" cy="6" r="6" fill="#a3abba"/><circle cx="6" cy="4.6" r="2" fill="#fff"/><path d="M2.4 9.8q3.6-3.8 7.2 0z" fill="#fff"/></svg>
<div class="a" style="left:420px;top:273px;width:474px;height:1px;background:#e8eaee"></div>
<!-- toggle -->
<div class="a" style="left:420px;top:293px;width:22px;height:8px;border-radius:4px;background:#2a9d80"></div>
<div class="a" style="left:431px;top:290.2px;width:13.5px;height:13.5px;border-radius:50%;background:#dfe3ea;box-shadow:0 1px 2px rgba(0,0,0,.3)"></div>
<div class="t" style="left:454px;top:292.8px;font-size:9.5px;font-weight:700;letter-spacing:-0.45px;color:#5f6878">Show name</div>
<!-- name input -->
<div class="a" style="left:420px;top:319px;width:474px;height:26.5px;border:1px solid #9aa3b3;border-radius:3px"></div>
<div class="a" style="left:428px;top:325px;width:75px;height:17px;background:#e4e4e4;filter:blur(1.2px)"></div>
<div class="t" style="left:501.8px;top:326.9px;font-size:11px;letter-spacing:-0.2px;color:#454a53">· Funnel Strategist <span style="display:inline-block;width:11px;height:11px;border:1px solid #333;vertical-align:-1px;background:#fff;position:relative;overflow:hidden"><svg style="position:absolute;left:0;top:0" width="9" height="9" viewBox="0 0 9 9"><path d="M.5 7.5l3-3.2 1.8 1.6 3-3.6" fill="none" stroke="#e0453a" stroke-width="1.1"/></svg></span> | Direct Response Copywriter</div>
<div class="a" style="left:743px;top:323px;width:123px;height:19px;background:linear-gradient(90deg,#ececec,#e8e8e8 75%,#e6b8b4 88%,#ececec);filter:blur(1.5px)"></div>
<div class="t" style="left:420.5px;top:357.5px;font-size:11px;letter-spacing:-0.17px;color:#3d4450">Advanced settings</div>
<svg class="a" style="left:518.5px;top:359.5px" width="11" height="7" viewBox="0 0 11 7"><path d="M1 6l4.5-4.5L10 6" fill="none" stroke="#3d4450" stroke-width="1.6"/></svg>

<!-- social card -->
<div class="a" style="left:404px;top:391px;width:506px;height:347px;background:#fff;border-radius:3px;box-shadow:0 0 5px rgba(0,0,0,.13)"></div>

<svg class="a" style="left:420px;top:405.5px" width="13" height="6" viewBox="0 0 13 6"><rect y="0" width="12.5" height="2" fill="#5a6474"/><rect y="4" width="12.5" height="2" fill="#5a6474"/></svg>
<div class="t" style="left:438.2px;top:402.5px;font-size:12px;letter-spacing:0.08px;-webkit-text-stroke:.35px #5a6474;color:#5a6474">Social networks</div>
<div class="a" style="left:800px;top:412px;width:12px;height:2px;background:#a0a8b8"></div>
<svg class="a" style="left:827px;top:401.5px" width="13" height="14" viewBox="0 0 13 14"><path d="M3.6 3.2V1.6a.8.8 0 0 1 .8-.8h5l2.2 2.2v6.6a.8.8 0 0 1-.8.8H9.4" fill="none" stroke="#a0a8b8" stroke-width="1.2"/><rect x="1.2" y="3.6" width="7.8" height="9.4" rx=".8" fill="#fff" stroke="#a0a8b8" stroke-width="1.2"/></svg>
<svg class="a" style="left:854.5px;top:402px" width="13" height="13" viewBox="0 0 13 13"><path d="M3.6 3.2a5 5 0 1 0 5.8 0" fill="none" stroke="#a0a8b8" stroke-width="1.45"/><path d="M6.5 .6v5.6" stroke="#a0a8b8" stroke-width="1.45"/></svg>
<svg class="a" style="left:883px;top:401.5px" width="12" height="14" viewBox="0 0 12 14"><path d="M2.3 3.8h7.4l-.5 8.6a.8.8 0 0 1-.8.7H3.6a.8.8 0 0 1-.8-.7z" fill="none" stroke="#a0a8b8" stroke-width="1.3"/><rect x=".6" y="2.1" width="10.8" height="1.4" fill="#a0a8b8"/><path d="M4 2.2V.9h4v1.3" fill="none" stroke="#a0a8b8" stroke-width="1.1"/><rect x="4.5" y="5.6" width="1.1" height="5.6" fill="#a0a8b8"/><rect x="6.5" y="5.6" width="1.1" height="5.6" fill="#a0a8b8"/></svg>
<!-- round select -->
<div class="a" style="left:442px;top:438px;width:129px;height:25.5px;border:1px solid #9aa3b3;border-radius:3px"></div>
<div class="t" style="left:451px;top:446.5px;font-size:9.5px;letter-spacing:-0.35px;color:#2f3540">Round</div>
<svg class="a" style="left:554.5px;top:448px" width="9" height="6" viewBox="0 0 9 6"><path d="M.6 .8l3.9 3.9L8.4.8" fill="none" stroke="#5f6878" stroke-width="1.1"/></svg>

<!-- rows -->
<div id="rows">
<svg class="a" style="left:422px;top:494.5px" width="8" height="10" viewBox="0 0 8 10"><g fill="#a3abba"><rect x="0" y="0" width="3" height="2.6"/><rect x="4.6" y="0" width="3" height="2.6"/><rect x="0" y="3.6" width="3" height="2.6"/><rect x="4.6" y="3.6" width="3" height="2.6"/><rect x="0" y="7.2" width="3" height="2.6"/><rect x="4.6" y="7.2" width="3" height="2.6"/></g></svg>
<div class="a" style="left:442px;top:486px;width:210px;height:26px;border:1px solid #9aa3b3;border-radius:3px"></div>
<svg class="a" style="left:450.5px;top:493.3px" width="12" height="12" viewBox="0 0 12 12"><circle cx="6" cy="6" r="5.8" fill="#e4509f"/><rect x="2.9" y="2.9" width="6.2" height="6.2" rx="1.7" fill="#c0136e" stroke="#ffd6ea" stroke-width="1"/><circle cx="6" cy="6" r="1.4" fill="#c0136e" stroke="#fff" stroke-width=".9"/></svg>
<div class="t" style="left:469px;top:494.8px;font-size:10px;letter-spacing:-0.34px;color:#2f3540">Instagram</div>
<svg class="a" style="left:635.5px;top:497px" width="9" height="6" viewBox="0 0 9 6"><path d="M.6 .8l3.9 3.9L8.4.8" fill="none" stroke="#5f6878" stroke-width="1.1"/></svg>
<div class="a" style="left:663px;top:486px;width:210px;height:26px;border:1px solid #9aa3b3;border-radius:3px;overflow:hidden"><div class="t" style="left:8.5px;top:7.2px;font-size:11px;letter-spacing:0px;color:#3a3f48;width:192px;overflow:hidden">https://www.instagram.com/jacob_suckow</div></div>
<svg class="a" style="left:885.5px;top:495.5px" width="8" height="8" viewBox="0 0 8 8"><path d="M.8 .8l6.4 6.4M7.2 .8L.8 7.2" stroke="#8d96a8" stroke-width="1.4"/></svg>
<svg class="a" style="left:422px;top:542.5px" width="8" height="10" viewBox="0 0 8 10"><g fill="#a3abba"><rect x="0" y="0" width="3" height="2.6"/><rect x="4.6" y="0" width="3" height="2.6"/><rect x="0" y="3.6" width="3" height="2.6"/><rect x="4.6" y="3.6" width="3" height="2.6"/><rect x="0" y="7.2" width="3" height="2.6"/><rect x="4.6" y="7.2" width="3" height="2.6"/></g></svg>
<div class="a" style="left:442px;top:534px;width:210px;height:26px;border:1px solid #9aa3b3;border-radius:3px"></div>
<svg class="a" style="left:450.5px;top:541.3px" width="12" height="12" viewBox="0 0 12 12"><circle cx="6" cy="6" r="5.9" fill="#0a78b5"/><rect x="3.2" y="5" width="1.3" height="4" fill="#fff"/><circle cx="3.85" cy="3.6" r=".8" fill="#fff"/><path d="M5.5 5h1.2v.6q.5-.7 1.4-.7q1.5 0 1.5 1.8V9H8.4V7q0-1-.8-1t-.9 1v2H5.5z" fill="#fff"/></svg>
<div class="t" style="left:469px;top:542.8px;font-size:10px;letter-spacing:-0.34px;color:#2f3540">LinkedIn</div>
<svg class="a" style="left:635.5px;top:545px" width="9" height="6" viewBox="0 0 9 6"><path d="M.6 .8l3.9 3.9L8.4.8" fill="none" stroke="#5f6878" stroke-width="1.1"/></svg>
<div class="a" style="left:663px;top:534px;width:210px;height:26px;border:1px solid #9aa3b3;border-radius:3px;overflow:hidden"><div class="t" style="left:8.5px;top:7.2px;font-size:11px;letter-spacing:0px;color:#3a3f48;width:192px;overflow:hidden">https://www.linkedin.com/in/jacobsuckow</div></div>
<svg class="a" style="left:885.5px;top:543.5px" width="8" height="8" viewBox="0 0 8 8"><path d="M.8 .8l6.4 6.4M7.2 .8L.8 7.2" stroke="#8d96a8" stroke-width="1.4"/></svg>
<svg class="a" style="left:422px;top:590.5px" width="8" height="10" viewBox="0 0 8 10"><g fill="#a3abba"><rect x="0" y="0" width="3" height="2.6"/><rect x="4.6" y="0" width="3" height="2.6"/><rect x="0" y="3.6" width="3" height="2.6"/><rect x="4.6" y="3.6" width="3" height="2.6"/><rect x="0" y="7.2" width="3" height="2.6"/><rect x="4.6" y="7.2" width="3" height="2.6"/></g></svg>
<div class="a" style="left:442px;top:582px;width:210px;height:26px;border:1px solid #9aa3b3;border-radius:3px"></div>
<svg class="a" style="left:452px;top:592px" width="9" height="7" viewBox="0 0 9 7"><rect width="9" height="7" rx="1.8" fill="#e31b1b"/><path d="M3.6 2v3l2.6-1.5z" fill="#fff"/></svg>
<div class="t" style="left:469px;top:590.8px;font-size:10px;letter-spacing:-0.34px;color:#2f3540">YouTube</div>
<svg class="a" style="left:635.5px;top:593px" width="9" height="6" viewBox="0 0 9 6"><path d="M.6 .8l3.9 3.9L8.4.8" fill="none" stroke="#5f6878" stroke-width="1.1"/></svg>
<div class="a" style="left:663px;top:582px;width:210px;height:26px;border:1px solid #9aa3b3;border-radius:3px;overflow:hidden"><div class="t" style="left:8.5px;top:7.2px;font-size:11px;letter-spacing:0px;color:#3a3f48;width:192px;overflow:hidden">https://m.youtube.com/channel/UCplEWxyz</div></div>
<svg class="a" style="left:885.5px;top:591.5px" width="8" height="8" viewBox="0 0 8 8"><path d="M.8 .8l6.4 6.4M7.2 .8L.8 7.2" stroke="#8d96a8" stroke-width="1.4"/></svg>
<svg class="a" style="left:422px;top:638.5px" width="8" height="10" viewBox="0 0 8 10"><g fill="#a3abba"><rect x="0" y="0" width="3" height="2.6"/><rect x="4.6" y="0" width="3" height="2.6"/><rect x="0" y="3.6" width="3" height="2.6"/><rect x="4.6" y="3.6" width="3" height="2.6"/><rect x="0" y="7.2" width="3" height="2.6"/><rect x="4.6" y="7.2" width="3" height="2.6"/></g></svg>
<div class="a" style="left:442px;top:630px;width:210px;height:26px;border:1px solid #9aa3b3;border-radius:3px"></div>
<svg class="a" style="left:450.5px;top:637px" width="12" height="13" viewBox="0 0 12 13"><circle cx="6" cy="6.2" r="5.8" fill="#1877f2"/><path d="M6.8 12.4V7.6h1.5l.3-1.7H6.8v-1q0-.8.8-.8h.9V2.6q-.6-.1-1.2-.1q-2 0-2 2.1v1.3H3.8v1.7h1.5v4.8z" fill="#fff"/></svg>
<div class="t" style="left:469px;top:638.8px;font-size:10px;letter-spacing:-0.34px;color:#2f3540">Facebook</div>
<svg class="a" style="left:635.5px;top:641px" width="9" height="6" viewBox="0 0 9 6"><path d="M.6 .8l3.9 3.9L8.4.8" fill="none" stroke="#5f6878" stroke-width="1.1"/></svg>
<div class="a" style="left:663px;top:630px;width:210px;height:26px;border:1px solid #9aa3b3;border-radius:3px;overflow:hidden"><div class="t" style="left:8.5px;top:7.2px;font-size:11px;letter-spacing:0px;color:#3a3f48;width:192px;overflow:hidden">https://m.facebook.com/topnotchcopyfb</div></div>
<svg class="a" style="left:885.5px;top:639.5px" width="8" height="8" viewBox="0 0 8 8"><path d="M.8 .8l6.4 6.4M7.2 .8L.8 7.2" stroke="#8d96a8" stroke-width="1.4"/></svg>
</div><!--/rows-->
<div class="a" style="left:625.5px;top:678.5px;width:64px;height:24.5px;border:1.3px solid #2f8f77;border-radius:3px"></div>
<svg class="a" style="left:641px;top:685.5px" width="10" height="10" viewBox="0 0 10 10"><path d="M5 .5v9M.5 5h9" stroke="#2f9a7e" stroke-width="1.5"/></svg>
<div class="t" style="left:656.5px;top:685.5px;font-size:10px;font-weight:700;letter-spacing:-0.8px;color:#2f9a7e">Add</div>
<div class="t" style="left:420.5px;top:714.5px;font-size:11px;letter-spacing:-0.17px;color:#3d4450">Advanced settings</div>
<svg class="a" style="left:518.5px;top:716.5px" width="11" height="7" viewBox="0 0 11 7"><path d="M1 6l4.5-4.5L10 6" fill="none" stroke="#3d4450" stroke-width="1.6"/></svg>

<!-- scrollbar -->
<div class="a" style="left:917px;top:47px;width:9px;height:696px;background:linear-gradient(90deg,rgba(0,0,0,0),rgba(0,0,0,.06))"></div>
<div class="a" style="left:926px;top:47px;width:2px;height:696px;background:#c9cdd3"></div>
<div class="a" style="left:926px;top:0;width:2px;height:376px;background:#8892a2"></div>

<!-- right panel -->
<div class="a" style="left:928px;top:0;width:304px;height:743px;background:#fff"></div>

<!-- phone -->
<div class="a" style="left:971.3px;top:10.9px;width:242.5px;height:487.5px;border:4.8px solid #9ea6b3;border-bottom-width:7px;border-radius:21px 21px 28px 28px;background:linear-gradient(#003b5f 0%,#00385b 20%,#002e4c 49%,#00223b 86%,#001d34 100%);box-shadow:0 3px 9px rgba(0,0,0,.32);overflow:hidden">
  <div class="a" style="left:0;top:0;width:100%;height:30.3px;background:#fff"></div>
</div>
<div class="a" style="left:987px;top:21.5px;width:187px;height:17.5px;border:1px solid #6b717c;border-radius:9px"></div>
<div class="t" style="left:993.5px;top:26.5px;font-size:9px;letter-spacing:0.45px;color:#6d7380">https://onlytap.io/jacobsuckow</div>
<svg class="a" style="left:1180.5px;top:23.5px" width="14" height="14" viewBox="0 0 14 14"><path d="M.8 13.2l.5-3.2 7.6-7.6 2.7 2.7-7.6 7.6z" fill="#6b717c"/><path d="M9.7 1.6l1-1a.9.9 0 0 1 1.3 0l1.4 1.4a.9.9 0 0 1 0 1.3l-1 1z" fill="#6b717c"/></svg>

<!-- avatar photo -->

<svg class="a" style="left:1054px;top:65.5px" width="80" height="80" viewBox="0 0 80 80"><defs><clipPath id="cp1"><circle cx="40" cy="40" r="40"/></clipPath><filter id="bl1" x="-5%" y="-5%" width="110%" height="110%"><feGaussianBlur stdDeviation="1.2"/></filter></defs><g clip-path="url(#cp1)">
<g filter="url(#bl1)"><rect width="80" height="80" fill="#b0b0aa"/><rect x="0" y="0" width="5" height="4" fill="#b8b8b2"/><rect x="4" y="0" width="4" height="3" fill="#b8b8b2"/><rect x="8" y="0" width="6" height="3" fill="#d0d0ca"/><rect x="12" y="0" width="4" height="3" fill="#d0d0ca"/><rect x="16" y="0" width="6" height="3" fill="#b8b8b2"/><rect x="20" y="0" width="5" height="3" fill="#d0d0ca"/><rect x="24" y="0" width="4" height="3" fill="#b8b8b2"/><rect x="28" y="0" width="6" height="3" fill="#c8c8c2"/><rect x="32" y="0" width="5" height="3" fill="#d0d0ca"/><rect x="36" y="0" width="5" height="4" fill="#b8b8b2"/><rect x="40" y="0" width="5" height="4" fill="#c8c8c2"/><rect x="44" y="0" width="4" height="4" fill="#b8b8b2"/><rect x="48" y="0" width="6" height="4" fill="#c8c8c2"/><rect x="52" y="0" width="4" height="4" fill="#b8b8b2"/><rect x="56" y="0" width="5" height="3" fill="#d0d0ca"/><rect x="60" y="0" width="4" height="3" fill="#b8b8b2"/><rect x="64" y="0" width="5" height="4" fill="#c8c8c2"/><rect x="68" y="0" width="5" height="3" fill="#d0d0ca"/><rect x="72" y="0" width="6" height="4" fill="#c8c8c2"/><rect x="76" y="0" width="5" height="3" fill="#d0d0ca"/><rect x="0" y="3" width="4" height="3" fill="#c8c8c2"/><rect x="4" y="3" width="4" height="4" fill="#c8c8c2"/><rect x="8" y="3" width="6" height="3" fill="#c8c8c2"/><rect x="12" y="3" width="6" height="3" fill="#c8c8c2"/><rect x="16" y="3" width="4" height="4" fill="#d0d0ca"/><rect x="20" y="3" width="4" height="4" fill="#c8c8c2"/><rect x="24" y="3" width="5" height="3" fill="#b8b8b2"/><rect x="28" y="3" width="6" height="3" fill="#d0d0ca"/><rect x="32" y="3" width="4" height="4" fill="#c8c8c2"/><rect x="36" y="3" width="5" height="4" fill="#b8b8b2"/><rect x="40" y="3" width="4" height="3" fill="#c8c8c2"/><rect x="44" y="3" width="4" height="4" fill="#c8c8c2"/><rect x="48" y="3" width="4" height="4" fill="#d0d0ca"/><rect x="52" y="3" width="5" height="3" fill="#c8c8c2"/><rect x="56" y="3" width="4" height="3" fill="#d0d0ca"/><rect x="60" y="3" width="6" height="3" fill="#c8c8c2"/><rect x="64" y="3" width="5" height="3" fill="#d0d0ca"/><rect x="68" y="3" width="4" height="3" fill="#c8c8c2"/><rect x="72" y="3" width="4" height="4" fill="#d0d0ca"/><rect x="76" y="3" width="5" height="4" fill="#b8b8b2"/><rect x="0" y="6" width="4" height="3" fill="#9c9c96"/><rect x="4" y="6" width="6" height="3" fill="#d6d6d0"/><rect x="8" y="6" width="6" height="3" fill="#e2e2dc"/><rect x="12" y="6" width="5" height="3" fill="#ececE6"/><rect x="16" y="6" width="5" height="4" fill="#e2e2dc"/><rect x="20" y="6" width="4" height="4" fill="#aaaaa4"/><rect x="24" y="6" width="5" height="3" fill="#ececE6"/><rect x="28" y="6" width="5" height="4" fill="#aaaaa4"/><rect x="32" y="6" width="4" height="3" fill="#aaaaa4"/><rect x="36" y="6" width="5" height="4" fill="#d6d6d0"/><rect x="40" y="6" width="4" height="4" fill="#e2e2dc"/><rect x="44" y="6" width="4" height="3" fill="#9c9c96"/><rect x="48" y="6" width="5" height="3" fill="#b8b8b2"/><rect x="52" y="6" width="5" height="3" fill="#aaaaa4"/><rect x="56" y="6" width="4" height="4" fill="#5c5c56"/><rect x="60" y="6" width="6" height="3" fill="#e2e2dc"/><rect x="64" y="6" width="4" height="4" fill="#d6d6d0"/><rect x="68" y="6" width="5" height="4" fill="#5c5c56"/><rect x="72" y="6" width="6" height="4" fill="#5c5c56"/><rect x="76" y="6" width="4" height="3" fill="#d6d6d0"/><rect x="0" y="9" width="5" height="3" fill="#e2e2dc"/><rect x="4" y="9" width="4" height="4" fill="#d6d6d0"/><rect x="8" y="9" width="5" height="4" fill="#9c9c96"/><rect x="12" y="9" width="5" height="3" fill="#767670"/><rect x="16" y="9" width="6" height="3" fill="#aaaaa4"/><rect x="20" y="9" width="6" height="4" fill="#b8b8b2"/><rect x="24" y="9" width="5" height="4" fill="#e2e2dc"/><rect x="28" y="9" width="6" height="4" fill="#aaaaa4"/><rect x="32" y="9" width="4" height="4" fill="#aaaaa4"/><rect x="36" y="9" width="4" height="3" fill="#ececE6"/><rect x="40" y="9" width="4" height="3" fill="#ececE6"/><rect x="44" y="9" width="4" height="3" fill="#767670"/><rect x="48" y="9" width="4" height="4" fill="#ececE6"/><rect x="52" y="9" width="5" height="4" fill="#d6d6d0"/><rect x="56" y="9" width="5" height="4" fill="#9c9c96"/><rect x="60" y="9" width="5" height="3" fill="#e2e2dc"/><rect x="64" y="9" width="6" height="4" fill="#b8b8b2"/><rect x="68" y="9" width="4" height="3" fill="#d6d6d0"/><rect x="72" y="9" width="4" height="4" fill="#e2e2dc"/><rect x="76" y="9" width="4" height="3" fill="#e2e2dc"/><rect x="0" y="12" width="6" height="4" fill="#d6d6d0"/><rect x="4" y="12" width="4" height="3" fill="#5c5c56"/><rect x="8" y="12" width="4" height="3" fill="#767670"/><rect x="12" y="12" width="6" height="3" fill="#9c9c96"/><rect x="16" y="12" width="5" height="3" fill="#ececE6"/><rect x="20" y="12" width="4" height="3" fill="#d6d6d0"/><rect x="24" y="12" width="5" height="3" fill="#d6d6d0"/><rect x="28" y="12" width="6" height="3" fill="#e2e2dc"/><rect x="32" y="12" width="6" height="4" fill="#d6d6d0"/><rect x="36" y="12" width="4" height="3" fill="#d6d6d0"/><rect x="40" y="12" width="6" height="3" fill="#9c9c96"/><rect x="44" y="12" width="4" height="4" fill="#ececE6"/><rect x="48" y="12" width="5" height="3" fill="#4a4a44"/><rect x="52" y="12" width="4" height="4" fill="#55554f"/><rect x="56" y="12" width="5" height="4" fill="#75756f"/><rect x="60" y="12" width="4" height="4" fill="#62625c"/><rect x="64" y="12" width="6" height="4" fill="#62625c"/><rect x="68" y="12" width="5" height="3" fill="#62625c"/><rect x="72" y="12" width="6" height="4" fill="#5c5c56"/><rect x="76" y="12" width="6" height="3" fill="#767670"/><rect x="0" y="15" width="6" height="4" fill="#b8b8b2"/><rect x="4" y="15" width="6" height="3" fill="#5c5c56"/><rect x="8" y="15" width="5" height="4" fill="#9c9c96"/><rect x="12" y="15" width="4" height="4" fill="#9c9c96"/><rect x="16" y="15" width="6" height="4" fill="#5c5c56"/><rect x="20" y="15" width="5" height="3" fill="#aaaaa4"/><rect x="24" y="15" width="4" height="3" fill="#75756f"/><rect x="28" y="15" width="6" height="3" fill="#75756f"/><rect x="32" y="15" width="4" height="4" fill="#62625c"/><rect x="36" y="15" width="5" height="3" fill="#75756f"/><rect x="40" y="15" width="5" height="4" fill="#62625c"/><rect x="44" y="15" width="6" height="4" fill="#75756f"/><rect x="48" y="15" width="6" height="3" fill="#75756f"/><rect x="52" y="15" width="6" height="3" fill="#62625c"/><rect x="56" y="15" width="4" height="3" fill="#62625c"/><rect x="60" y="15" width="6" height="4" fill="#4a4a44"/><rect x="64" y="15" width="4" height="4" fill="#75756f"/><rect x="68" y="15" width="6" height="4" fill="#55554f"/><rect x="72" y="15" width="6" height="4" fill="#9c9c96"/><rect x="76" y="15" width="5" height="3" fill="#d6d6d0"/><rect x="0" y="18" width="6" height="3" fill="#9c9c96"/><rect x="4" y="18" width="6" height="3" fill="#9c9c96"/><rect x="8" y="18" width="6" height="4" fill="#d6d6d0"/><rect x="12" y="18" width="6" height="4" fill="#4a4a44"/><rect x="16" y="18" width="4" height="3" fill="#62625c"/><rect x="20" y="18" width="4" height="3" fill="#62625c"/><rect x="24" y="18" width="5" height="3" fill="#4a4a44"/><rect x="28" y="18" width="6" height="3" fill="#75756f"/><rect x="32" y="18" width="4" height="3" fill="#55554f"/><rect x="36" y="18" width="5" height="3" fill="#4a4a44"/><rect x="40" y="18" width="6" height="3" fill="#4a4a44"/><rect x="44" y="18" width="4" height="3" fill="#75756f"/><rect x="48" y="18" width="4" height="3" fill="#75756f"/><rect x="52" y="18" width="4" height="3" fill="#62625c"/><rect x="56" y="18" width="6" height="3" fill="#55554f"/><rect x="60" y="18" width="4" height="3" fill="#75756f"/><rect x="64" y="18" width="5" height="4" fill="#75756f"/><rect x="68" y="18" width="4" height="3" fill="#4a4a44"/><rect x="72" y="18" width="5" height="4" fill="#6a6a64"/><rect x="76" y="18" width="5" height="3" fill="#ececE6"/><rect x="0" y="21" width="6" height="3" fill="#aaaaa4"/><rect x="4" y="21" width="6" height="4" fill="#e2e2dc"/><rect x="8" y="21" width="6" height="4" fill="#aaaaa4"/><rect x="12" y="21" width="5" height="3" fill="#4a4a44"/><rect x="16" y="21" width="5" height="3" fill="#62625c"/><rect x="20" y="21" width="5" height="3" fill="#4a4a44"/><rect x="24" y="21" width="4" height="4" fill="#62625c"/><rect x="28" y="21" width="4" height="4" fill="#55554f"/><rect x="32" y="21" width="4" height="4" fill="#55554f"/><rect x="36" y="21" width="5" height="3" fill="#4a4a44"/><rect x="40" y="21" width="6" height="3" fill="#62625c"/><rect x="44" y="21" width="6" height="3" fill="#75756f"/><rect x="48" y="21" width="6" height="3" fill="#b8b8b2"/><rect x="52" y="21" width="6" height="3" fill="#e2e2dc"/><rect x="56" y="21" width="6" height="3" fill="#ececE6"/><rect x="60" y="21" width="5" height="3" fill="#9c9c96"/><rect x="64" y="21" width="5" height="4" fill="#ececE6"/><rect x="68" y="21" width="5" height="3" fill="#9c9c96"/><rect x="72" y="21" width="4" height="3" fill="#9c9c96"/><rect x="76" y="21" width="5" height="4" fill="#e2e2dc"/><rect x="0" y="24" width="6" height="3" fill="#767670"/><rect x="4" y="24" width="5" height="4" fill="#ececE6"/><rect x="8" y="24" width="5" height="4" fill="#9c9c96"/><rect x="12" y="24" width="6" height="4" fill="#75756f"/><rect x="16" y="24" width="6" height="4" fill="#4a4a44"/><rect x="20" y="24" width="6" height="3" fill="#62625c"/><rect x="24" y="24" width="6" height="4" fill="#b8b8b2"/><rect x="28" y="24" width="6" height="4" fill="#ececE6"/><rect x="32" y="24" width="5" height="3" fill="#d6d6d0"/><rect x="36" y="24" width="5" height="4" fill="#aaaaa4"/><rect x="40" y="24" width="4" height="3" fill="#e2e2dc"/><rect x="44" y="24" width="5" height="3" fill="#5c5c56"/><rect x="48" y="24" width="6" height="3" fill="#6a6a64"/><rect x="52" y="24" width="5" height="3" fill="#ececE6"/><rect x="56" y="24" width="5" height="3" fill="#e2e2dc"/><rect x="60" y="24" width="4" height="4" fill="#ececE6"/><rect x="64" y="24" width="6" height="4" fill="#ececE6"/><rect x="68" y="24" width="6" height="3" fill="#d6d6d0"/><rect x="72" y="24" width="4" height="3" fill="#5c5c56"/><rect x="76" y="24" width="5" height="4" fill="#d6d6d0"/><rect x="0" y="27" width="6" height="3" fill="#d6d6d0"/><rect x="4" y="27" width="4" height="3" fill="#aaaaa4"/><rect x="8" y="27" width="4" height="3" fill="#9c9c96"/><rect x="12" y="27" width="5" height="4" fill="#aaaaa4"/><rect x="16" y="27" width="4" height="3" fill="#d6d6d0"/><rect x="20" y="27" width="4" height="3" fill="#ececE6"/><rect x="24" y="27" width="6" height="3" fill="#6a6a64"/><rect x="28" y="27" width="5" height="4" fill="#b8b8b2"/><rect x="32" y="27" width="5" height="4" fill="#ececE6"/><rect x="36" y="27" width="4" height="4" fill="#aaaaa4"/><rect x="40" y="27" width="4" height="4" fill="#9c9c96"/><rect x="44" y="27" width="5" height="3" fill="#ececE6"/><rect x="48" y="27" width="6" height="4" fill="#d6d6d0"/><rect x="52" y="27" width="4" height="4" fill="#d6d6d0"/><rect x="56" y="27" width="4" height="4" fill="#9c9c96"/><rect x="60" y="27" width="6" height="3" fill="#6a6a64"/><rect x="64" y="27" width="5" height="4" fill="#d6d6d0"/><rect x="68" y="27" width="4" height="4" fill="#e2e2dc"/><rect x="72" y="27" width="6" height="3" fill="#d6d6d0"/><rect x="76" y="27" width="6" height="4" fill="#b8b8b2"/><rect x="0" y="30" width="4" height="4" fill="#e2e2dc"/><rect x="4" y="30" width="5" height="3" fill="#b8b8b2"/><rect x="8" y="30" width="6" height="4" fill="#ececE6"/><rect x="12" y="30" width="5" height="4" fill="#ececE6"/><rect x="16" y="30" width="6" height="3" fill="#d6d6d0"/><rect x="20" y="30" width="4" height="4" fill="#ececE6"/><rect x="24" y="30" width="5" height="3" fill="#9c9c96"/><rect x="28" y="30" width="5" height="3" fill="#b8b8b2"/><rect x="32" y="30" width="4" height="3" fill="#5c5c56"/><rect x="36" y="30" width="5" height="3" fill="#ececE6"/><rect x="40" y="30" width="6" height="3" fill="#e2e2dc"/><rect x="44" y="30" width="6" height="4" fill="#aaaaa4"/><rect x="48" y="30" width="5" height="3" fill="#d6d6d0"/><rect x="52" y="30" width="6" height="3" fill="#ececE6"/><rect x="56" y="30" width="4" height="3" fill="#6a6a64"/><rect x="60" y="30" width="5" height="3" fill="#d6d6d0"/><rect x="64" y="30" width="6" height="4" fill="#b8b8b2"/><rect x="68" y="30" width="5" height="4" fill="#b8b8b2"/><rect x="72" y="30" width="6" height="3" fill="#b8b8b2"/><rect x="76" y="30" width="6" height="3" fill="#d6d6d0"/><rect x="0" y="33" width="5" height="4" fill="#aaaaa4"/><rect x="4" y="33" width="4" height="4" fill="#767670"/><rect x="8" y="33" width="4" height="4" fill="#5c5c56"/><rect x="12" y="33" width="5" height="4" fill="#aaaaa4"/><rect x="16" y="33" width="6" height="3" fill="#6a6a64"/><rect x="20" y="33" width="6" height="3" fill="#767670"/><rect x="24" y="33" width="5" height="4" fill="#ececE6"/><rect x="28" y="33" width="5" height="4" fill="#e2e2dc"/><rect x="32" y="33" width="6" height="3" fill="#b8b8b2"/><rect x="36" y="33" width="4" height="4" fill="#aaaaa4"/><rect x="40" y="33" width="4" height="4" fill="#ececE6"/><rect x="44" y="33" width="5" height="3" fill="#e2e2dc"/><rect x="48" y="33" width="6" height="4" fill="#9c9c96"/><rect x="52" y="33" width="5" height="3" fill="#aaaaa4"/><rect x="56" y="33" width="4" height="4" fill="#767670"/><rect x="60" y="33" width="5" height="4" fill="#9c9c96"/><rect x="64" y="33" width="5" height="3" fill="#ececE6"/><rect x="68" y="33" width="5" height="3" fill="#e2e2dc"/><rect x="72" y="33" width="5" height="4" fill="#e2e2dc"/><rect x="76" y="33" width="6" height="3" fill="#aaaaa4"/><rect x="0" y="36" width="5" height="4" fill="#767670"/><rect x="4" y="36" width="5" height="3" fill="#9c9c96"/><rect x="8" y="36" width="4" height="4" fill="#ececE6"/><rect x="12" y="36" width="4" height="4" fill="#5c5c56"/><rect x="16" y="36" width="4" height="3" fill="#aaaaa4"/><rect x="20" y="36" width="4" height="3" fill="#e2e2dc"/><rect x="24" y="36" width="6" height="3" fill="#d6d6d0"/><rect x="28" y="36" width="5" height="3" fill="#5c5c56"/><rect x="32" y="36" width="6" height="4" fill="#5c5c56"/><rect x="36" y="36" width="5" height="3" fill="#e2e2dc"/><rect x="40" y="36" width="5" height="3" fill="#6a6a64"/><rect x="44" y="36" width="6" height="4" fill="#ececE6"/><rect x="48" y="36" width="5" height="4" fill="#ececE6"/><rect x="52" y="36" width="5" height="4" fill="#d6d6d0"/><rect x="56" y="36" width="5" height="3" fill="#aaaaa4"/><rect x="60" y="36" width="6" height="4" fill="#aaaaa4"/><rect x="64" y="36" width="4" height="4" fill="#9c9c96"/><rect x="68" y="36" width="6" height="4" fill="#ececE6"/><rect x="72" y="36" width="4" height="4" fill="#d6d6d0"/><rect x="76" y="36" width="4" height="3" fill="#9c9c96"/><rect x="0" y="39" width="6" height="4" fill="#ececE6"/><rect x="4" y="39" width="6" height="3" fill="#767670"/><rect x="8" y="39" width="5" height="3" fill="#e2e2dc"/><rect x="12" y="39" width="6" height="4" fill="#ececE6"/><rect x="16" y="39" width="5" height="4" fill="#b8b8b2"/><rect x="20" y="39" width="6" height="3" fill="#e2e2dc"/><rect x="24" y="39" width="6" height="3" fill="#d6d6d0"/><rect x="28" y="39" width="4" height="4" fill="#ececE6"/><rect x="32" y="39" width="4" height="3" fill="#aaaaa4"/><rect x="36" y="39" width="5" height="4" fill="#e2e2dc"/><rect x="40" y="39" width="5" height="3" fill="#b8b8b2"/><rect x="44" y="39" width="6" height="4" fill="#aaaaa4"/><rect x="48" y="39" width="6" height="3" fill="#ececE6"/><rect x="52" y="39" width="6" height="4" fill="#9c9c96"/><rect x="56" y="39" width="6" height="3" fill="#6a6a64"/><rect x="60" y="39" width="5" height="4" fill="#e2e2dc"/><rect x="64" y="39" width="6" height="4" fill="#aaaaa4"/><rect x="68" y="39" width="5" height="3" fill="#ececE6"/><rect x="72" y="39" width="5" height="4" fill="#aaaaa4"/><rect x="76" y="39" width="6" height="3" fill="#b8b8b2"/><rect x="0" y="42" width="6" height="3" fill="#aaaaa4"/><rect x="4" y="42" width="6" height="3" fill="#aaaaa4"/><rect x="8" y="42" width="4" height="4" fill="#aaaaa4"/><rect x="12" y="42" width="5" height="4" fill="#9c9c96"/><rect x="16" y="42" width="5" height="4" fill="#ececE6"/><rect x="20" y="42" width="6" height="3" fill="#767670"/><rect x="24" y="42" width="6" height="3" fill="#d6d6d0"/><rect x="28" y="42" width="4" height="4" fill="#b8b8b2"/><rect x="32" y="42" width="4" height="4" fill="#aaaaa4"/><rect x="36" y="42" width="4" height="4" fill="#b8b8b2"/><rect x="40" y="42" width="6" height="3" fill="#6a6a64"/><rect x="44" y="42" width="4" height="3" fill="#ececE6"/><rect x="48" y="42" width="6" height="4" fill="#d6d6d0"/><rect x="52" y="42" width="4" height="3" fill="#9c9c96"/><rect x="56" y="42" width="4" height="3" fill="#ececE6"/><rect x="60" y="42" width="6" height="4" fill="#aaaaa4"/><rect x="64" y="42" width="4" height="4" fill="#d6d6d0"/><rect x="68" y="42" width="4" height="3" fill="#ececE6"/><rect x="72" y="42" width="5" height="4" fill="#aaaaa4"/><rect x="76" y="42" width="5" height="4" fill="#b8b8b2"/><rect x="0" y="45" width="6" height="4" fill="#5c5c56"/><rect x="4" y="45" width="5" height="4" fill="#b8b8b2"/><rect x="8" y="45" width="6" height="3" fill="#6a6a64"/><rect x="12" y="45" width="5" height="4" fill="#5c5c56"/><rect x="16" y="45" width="5" height="3" fill="#e2e2dc"/><rect x="20" y="45" width="5" height="4" fill="#d6d6d0"/><rect x="24" y="45" width="6" height="3" fill="#b8b8b2"/><rect x="28" y="45" width="4" height="4" fill="#ececE6"/><rect x="32" y="45" width="6" height="3" fill="#767670"/><rect x="36" y="45" width="6" height="4" fill="#aaaaa4"/><rect x="40" y="45" width="4" height="4" fill="#aaaaa4"/><rect x="44" y="45" width="6" height="3" fill="#767670"/><rect x="48" y="45" width="5" height="3" fill="#d6d6d0"/><rect x="52" y="45" width="6" height="3" fill="#6a6a64"/><rect x="56" y="45" width="6" height="4" fill="#d6d6d0"/><rect x="60" y="45" width="6" height="4" fill="#e2e2dc"/><rect x="64" y="45" width="4" height="4" fill="#e2e2dc"/><rect x="68" y="45" width="5" height="3" fill="#5c5c56"/><rect x="72" y="45" width="4" height="3" fill="#d6d6d0"/><rect x="76" y="45" width="5" height="4" fill="#ececE6"/><rect x="0" y="48" width="5" height="3" fill="#e2e2dc"/><rect x="4" y="48" width="4" height="3" fill="#d6d6d0"/><rect x="8" y="48" width="5" height="3" fill="#ececE6"/><rect x="12" y="48" width="6" height="3" fill="#d6d6d0"/><rect x="16" y="48" width="4" height="3" fill="#aaaaa4"/><rect x="20" y="48" width="6" height="4" fill="#b8b8b2"/><rect x="24" y="48" width="5" height="3" fill="#767670"/><rect x="28" y="48" width="5" height="3" fill="#ececE6"/><rect x="32" y="48" width="4" height="3" fill="#ececE6"/><rect x="36" y="48" width="4" height="4" fill="#d6d6d0"/><rect x="40" y="48" width="6" height="3" fill="#b8b8b2"/><rect x="44" y="48" width="5" height="3" fill="#aaaaa4"/><rect x="48" y="48" width="4" height="3" fill="#b8b8b2"/><rect x="52" y="48" width="5" height="3" fill="#e2e2dc"/><rect x="56" y="48" width="4" height="4" fill="#aaaaa4"/><rect x="60" y="48" width="6" height="3" fill="#b8b8b2"/><rect x="64" y="48" width="4" height="3" fill="#e2e2dc"/><rect x="68" y="48" width="4" height="3" fill="#d6d6d0"/><rect x="72" y="48" width="4" height="4" fill="#aaaaa4"/><rect x="76" y="48" width="5" height="3" fill="#5c5c56"/><rect x="0" y="51" width="4" height="3" fill="#767670"/><rect x="4" y="51" width="5" height="4" fill="#d6d6d0"/><rect x="8" y="51" width="6" height="4" fill="#aaaaa4"/><rect x="12" y="51" width="6" height="3" fill="#9c9c96"/><rect x="16" y="51" width="4" height="4" fill="#aaaaa4"/><rect x="20" y="51" width="6" height="4" fill="#ececE6"/><rect x="24" y="51" width="4" height="4" fill="#9c9c96"/><rect x="28" y="51" width="6" height="4" fill="#e2e2dc"/><rect x="32" y="51" width="6" height="3" fill="#e2e2dc"/><rect x="36" y="51" width="5" height="3" fill="#aaaaa4"/><rect x="40" y="51" width="5" height="4" fill="#9c9c96"/><rect x="44" y="51" width="5" height="3" fill="#9c9c96"/><rect x="48" y="51" width="6" height="3" fill="#e2e2dc"/><rect x="52" y="51" width="5" height="4" fill="#aaaaa4"/><rect x="56" y="51" width="6" height="4" fill="#ececE6"/><rect x="60" y="51" width="4" height="3" fill="#b8b8b2"/><rect x="64" y="51" width="4" height="4" fill="#e2e2dc"/><rect x="68" y="51" width="5" height="3" fill="#9c9c96"/><rect x="72" y="51" width="5" height="3" fill="#ececE6"/><rect x="76" y="51" width="4" height="4" fill="#aaaaa4"/><rect x="0" y="54" width="4" height="3" fill="#9c9c96"/><rect x="4" y="54" width="6" height="3" fill="#9c9c96"/><rect x="8" y="54" width="6" height="3" fill="#ececE6"/><rect x="12" y="54" width="5" height="4" fill="#d6d6d0"/><rect x="16" y="54" width="4" height="3" fill="#e2e2dc"/><rect x="20" y="54" width="6" height="3" fill="#e2e2dc"/><rect x="24" y="54" width="4" height="4" fill="#e2e2dc"/><rect x="28" y="54" width="4" height="3" fill="#d6d6d0"/><rect x="32" y="54" width="6" height="3" fill="#d6d6d0"/><rect x="36" y="54" width="6" height="3" fill="#9c9c96"/><rect x="40" y="54" width="4" height="4" fill="#ececE6"/><rect x="44" y="54" width="4" height="4" fill="#e2e2dc"/><rect x="48" y="54" width="6" height="3" fill="#e2e2dc"/><rect x="52" y="54" width="4" height="4" fill="#ececE6"/><rect x="56" y="54" width="5" height="4" fill="#b8b8b2"/><rect x="60" y="54" width="4" height="4" fill="#5c5c56"/><rect x="64" y="54" width="5" height="3" fill="#ececE6"/><rect x="68" y="54" width="5" height="4" fill="#ececE6"/><rect x="72" y="54" width="4" height="4" fill="#9c9c96"/><rect x="76" y="54" width="6" height="3" fill="#9c9c96"/><rect x="0" y="57" width="4" height="3" fill="#ececE6"/><rect x="4" y="57" width="4" height="3" fill="#b8b8b2"/><rect x="8" y="57" width="4" height="4" fill="#aaaaa4"/><rect x="12" y="57" width="4" height="4" fill="#767670"/><rect x="16" y="57" width="6" height="3" fill="#d6d6d0"/><rect x="20" y="57" width="4" height="4" fill="#d6d6d0"/><rect x="24" y="57" width="6" height="3" fill="#e2e2dc"/><rect x="28" y="57" width="5" height="4" fill="#ececE6"/><rect x="32" y="57" width="4" height="4" fill="#d6d6d0"/><rect x="36" y="57" width="6" height="4" fill="#ececE6"/><rect x="40" y="57" width="5" height="4" fill="#e2e2dc"/><rect x="44" y="57" width="6" height="4" fill="#ececE6"/><rect x="48" y="57" width="5" height="4" fill="#ececE6"/><rect x="52" y="57" width="4" height="3" fill="#aaaaa4"/><rect x="56" y="57" width="6" height="3" fill="#b8b8b2"/><rect x="60" y="57" width="5" height="3" fill="#9c9c96"/><rect x="64" y="57" width="6" height="4" fill="#6a6a64"/><rect x="68" y="57" width="4" height="4" fill="#b8b8b2"/><rect x="72" y="57" width="4" height="4" fill="#ececE6"/><rect x="76" y="57" width="5" height="4" fill="#ececE6"/><rect x="44" y="34" width="8" height="10" rx="3" fill="#3c3c37"/><path d="M0 57h80v23H0z" fill="#8f8678"/><path d="M30 55h50v4H30z" fill="#d0d0ca"/><path d="M0 61h80v4H0z" fill="#9a9080"/><path d="M0 47l14-1 8 6-2 7H0z" fill="#44443e"/></g>
<circle cx="28.5" cy="49.5" r="3.2" fill="#b8907a"/>
    <path d="M22 54l8-2 6 5-3 8-8 2z" fill="#5a6540"/>
    <path d="M33 55l5-2 2 3-5 3z" fill="#5a6540"/>
    <path d="M35 44l3-8 1.6 1-3 8z" fill="#5a6540"/>
    <path d="M30 59l10-2 3 11h-3l-2-7-6 3z" fill="#1e2332"/>
    <path d="M22 64l7 0 0 6-6 0z" fill="#1e2332"/>
    <rect x="23" y="68" width="5" height="3" fill="#8a6a3e"/>
    <rect x="39" y="67" width="5" height="3" fill="#8a6a3e"/>
  </g></svg>

<!-- name -->
<div class="a" style="left:986.5px;top:155px;width:78px;height:12px;background:linear-gradient(#053c5f 0%,#154a6c 40%,#35627f 72%,#245272 100%);filter:blur(.6px)"></div>
<div class="t" style="left:1066.5px;top:156px;font-size:11px;letter-spacing:-0.2px;-webkit-text-stroke:.3px #fff;color:#fff">Funnel Strategist <span style="display:inline-block;width:11px;height:10px;background:#fff;vertical-align:-1px;position:relative;margin:0 0 0 2px"><svg style="position:absolute;left:1px;top:1px" width="9" height="8" viewBox="0 0 9 8"><path d="M.5 7l3-3.2 1.8 1.6 3-3.6" fill="none" stroke="#e0453a" stroke-width="1.1"/></svg></span><span style="margin-left:3.2px">|</span><span style="margin-left:2.4px;letter-spacing:0px">Direct</span></div>
<div class="t" style="left:986.5px;top:170.5px;font-size:11px;letter-spacing:-0.26px;-webkit-text-stroke:.3px #fff;color:#fff">Response Copywriter</div>
<div class="a" style="left:1088px;top:169.5px;width:111px;height:15px;background:linear-gradient(90deg,rgba(0,58,92,0) 80%,rgba(140,50,60,.7) 95%,rgba(0,58,92,0)),linear-gradient(#0c4264 0%,#275876 45%,#386682 65%,#1d4c6c 100%);filter:blur(.6px)"></div>

<!-- social circles -->
<svg class="a" style="left:1019.5px;top:194px" width="28" height="28" viewBox="0 0 28 28"><circle cx="14" cy="14" r="13.8" fill="#d0147f"/><rect x="7.5" y="7.5" width="13" height="13" rx="3.6" fill="none" stroke="#fff" stroke-width="1.8"/><circle cx="14" cy="14" r="3.1" fill="none" stroke="#fff" stroke-width="1.8"/><circle cx="17.9" cy="10.1" r=".9" fill="#fff"/></svg>
<svg class="a" style="left:1059.5px;top:194px" width="28" height="28" viewBox="0 0 28 28"><circle cx="14" cy="14" r="13.8" fill="#0a78b5"/><rect x="7.6" y="11.2" width="2.8" height="8.6" fill="#fff"/><circle cx="9" cy="8.2" r="1.7" fill="#fff"/><path d="M12.6 11.2h2.7v1.3q1-1.5 3-1.5q3.3 0 3.3 3.8v5h-2.8v-4.5q0-1.8-1.5-1.8t-1.9 1.8v4.5h-2.8z" fill="#fff"/></svg>
<svg class="a" style="left:1099.5px;top:194px" width="28" height="28" viewBox="0 0 28 28"><circle cx="14" cy="14" r="13.8" fill="#ee0f0f"/><rect x="6.8" y="9.2" width="14.4" height="9.8" rx="2.6" fill="#fff"/><path d="M12.3 11.4v5.4l4.6-2.7z" fill="#ee0f0f"/></svg>
<svg class="a" style="left:1139.5px;top:194px" width="28" height="28" viewBox="0 0 28 28"><circle cx="14" cy="14" r="13.8" fill="#1877f2"/><path d="M15.2 22.5v-7.4h2.4l.4-2.8h-2.8v-1.8q0-1.2 1.2-1.2h1.6V6.8q-.9-.2-2-.2q-3.2 0-3.2 3.4v2.3H10.4v2.8h2.4v7.4z" fill="#fff"/></svg>

<!-- divider -->
<div class="a" style="left:1051px;top:252px;width:86px;height:1.5px;background:#a8b4c0"></div>

<!-- link buttons -->
<div class="a" style="left:986px;top:279px;width:215px;height:28.5px;background:#02befd;border-radius:3px"></div>
<div class="a" style="left:986px;top:313.5px;width:215px;height:29px;background:#02befd;border-radius:3px"></div>
<div class="a" style="left:986px;top:348px;width:215px;height:29px;background:#02befd;border-radius:3px"></div>
<div class="t" style="left:986px;width:215px;text-align:center;top:286.7px;font-size:11px;letter-spacing:-0.19px;-webkit-text-stroke:.3px #fff;color:#fff">Get My Newsletter</div>
<div class="t" style="left:986px;width:215px;text-align:center;top:321.9px;font-size:11px;letter-spacing:-0.12px;-webkit-text-stroke:.3px #fff;color:#fff">Listen to the Podcast on Spotify</div>
<div class="t" style="left:986px;width:215px;text-align:center;top:356.5px;font-size:11px;letter-spacing:-0.32px;-webkit-text-stroke:.3px #fff;color:#fff">How Can We Work Together?</div>

<!-- publish -->
<div class="a" style="left:971px;top:514px;width:222px;height:1px;background:#c8ced6"></div>
<div class="a" style="left:1030px;top:530.5px;width:22px;height:8.5px;border-radius:4.5px;background:#2a9d80"></div>
<div class="a" style="left:1041px;top:527.8px;width:13.6px;height:13.6px;border-radius:50%;background:#dfe3ea;box-shadow:0 1px 2px rgba(0,0,0,.3)"></div>
<div class="t" style="left:1074.5px;top:527.3px;font-size:13.4px;letter-spacing:0.05px;color:#555d6a">Published</div>
<div class="a" style="left:971px;top:555.5px;width:222px;height:26px;border:1px solid #a8dccc;border-radius:2px"></div>
<div class="t" style="left:971px;width:222px;text-align:center;top:562.5px;font-size:10.5px;font-weight:700;letter-spacing:-0.3px;color:#a8dccc">Save</div>

</body></html>
